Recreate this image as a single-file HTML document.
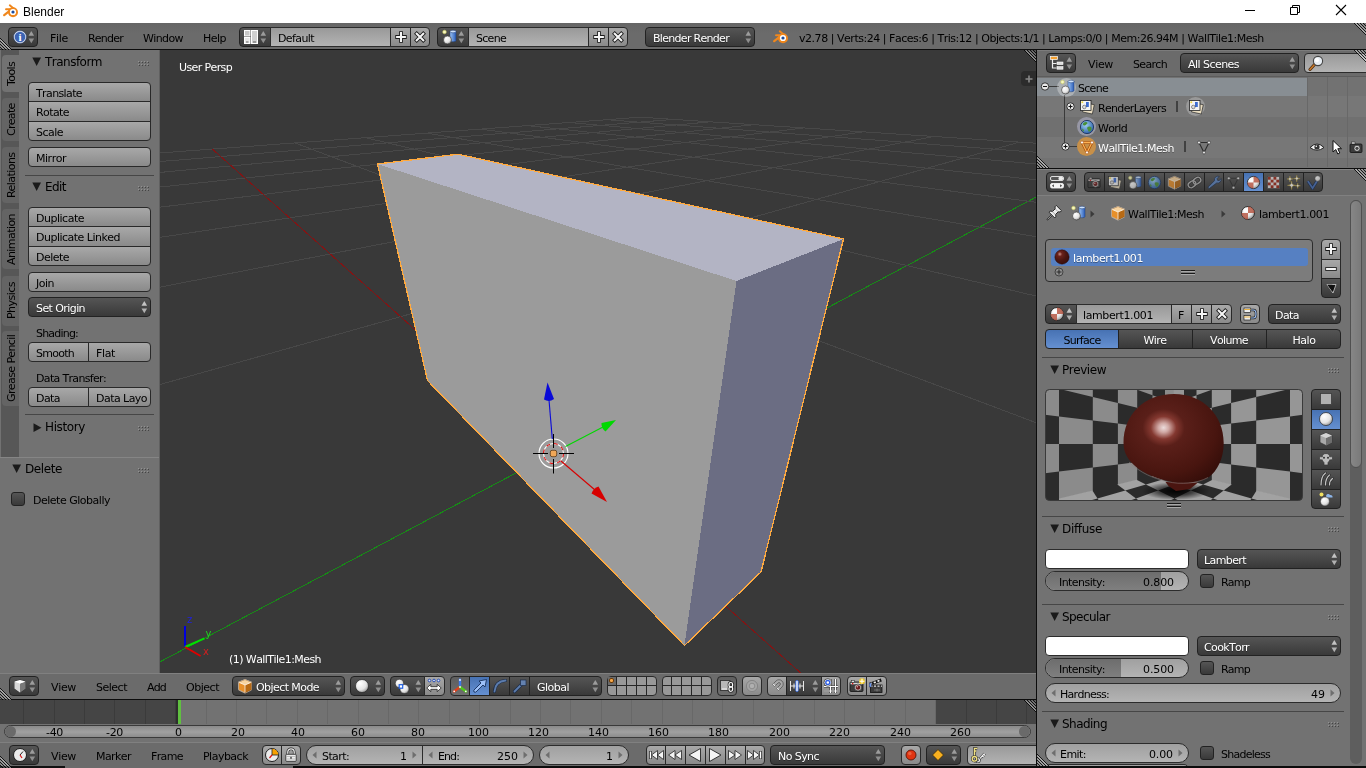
<!DOCTYPE html>
<html><head><meta charset="utf-8"><title>Blender</title>
<style>
html,body{margin:0;padding:0;background:#727272;overflow:hidden}
body{width:1366px;height:768px;position:relative;font-family:"DejaVu Sans","Liberation Sans",sans-serif;font-size:11px;color:#000}
div,span,svg{position:absolute;box-sizing:border-box}
.t{will-change:transform;white-space:nowrap;line-height:13px;font-size:11px;letter-spacing:-0.43px;font-kerning:none}
.w{color:#fff;text-shadow:0 1px 0 rgba(0,0,0,.35)}
.pt{font-size:12px;line-height:14px;letter-spacing:-0.38px}
.tool{border:1px solid #292929;background:linear-gradient(#a8a8a8,#8a8a8a);}
.ton{border:1px solid #292929;background:linear-gradient(#5e5e5e,#6e6e6e);}
.menu{border:1px solid #222;background:linear-gradient(#555,#393939);border-radius:4px}
.num{border:1px solid #2c2c2c;background:linear-gradient(#a0a0a0,#b4b4b4);border-radius:10px}
.txf{border:1px solid #2c2c2c;background:linear-gradient(#999,#b3b3b3)}
.rad{border:1px solid #222;background:linear-gradient(#555,#393939)}
.sel{background:linear-gradient(#4772b3,#6590d1)}
.chk{border:1px solid #222;background:linear-gradient(#555,#393939);border-radius:3px}
.r4{border-radius:4px}
.rl{border-radius:4px 0 0 4px}
.rr{border-radius:0 4px 4px 0}
.rt{border-radius:4px 4px 0 0}
.rb{border-radius:0 0 4px 4px}
.sep{background:#464646;height:1px}
</style></head>
<body>
<svg width="0" height="0" style="left:0;top:0"><defs><radialGradient id="gs" cx="0.35" cy="0.3" r="0.8"><stop offset="0" stop-color="#fff"/><stop offset="0.6" stop-color="#e4e4e4"/><stop offset="1" stop-color="#8a8a8a"/></radialGradient><radialGradient id="gw" cx="0.4" cy="0.35" r="0.7"><stop offset="0" stop-color="#9fd0f0"/><stop offset="1" stop-color="#2a5ea8"/></radialGradient><linearGradient id="gc" x1="0" x2="1"><stop offset="0" stop-color="#9cc4f4"/><stop offset="1" stop-color="#2a5cb8"/></linearGradient><radialGradient id="gm" cx="0.35" cy="0.3" r="0.9"><stop offset="0" stop-color="#c89088"/><stop offset="0.18" stop-color="#6a221c"/><stop offset="0.5" stop-color="#4a1611"/><stop offset="1" stop-color="#300a07"/></radialGradient></defs></svg>
<div style="left:0px;top:0px;width:1366px;height:23px;background:#fff"></div>
<span class="t " style="left:23px;top:4px;font-family:'Liberation Sans',sans-serif;font-size:12px;line-height:16px;color:#000;letter-spacing:0">Blender</span>
<svg style="left:3px;top:3px" width="16" height="16" viewBox="0 0 16 16"><g stroke="#f0871c" stroke-linecap="round" fill="none"><path d="M1.200 12.200L7.500 7.200" stroke-width="2.200"/><path d="M3 6.300h6" stroke-width="1.900"/><path d="M6.800 2.300L10.500 5.500" stroke-width="1.900"/></g><circle cx="10" cy="9.300" r="5" fill="#f0871c"/><circle cx="10" cy="9" r="3.100" fill="#fff"/><circle cx="10" cy="9" r="1.600" fill="#1c4c9c"/></svg>
<svg style="left:1230px;top:0px" width="136" height="23" viewBox="0 0 136 23"><path d="M15 10.500h10" stroke="#000" fill="none"/><path d="M60.500 7.500h7v7h-7z M62.500 7.500v-2h7v7h-2" stroke="#000" fill="none"/><path d="M106 5l10 10M116 5l-10 10" stroke="#000" fill="none" stroke-width="1.100"/></svg>
<div style="left:0px;top:23px;width:1366px;height:26px;background:linear-gradient(#666,#6b6b6b 40%)"></div>
<div style="left:0px;top:49px;width:1366px;height:1px;background:#0c0c0c"></div>
<div class="menu" style="left:8px;top:27px;width:30px;height:20px;"></div>
<svg style="left:27.8px;top:30.5px" width="7" height="13" viewBox="0 0 7 13"><path d="M0.500 4.800L3.300 0L6.100 4.800z" fill="#9c9c9c"/><path d="M0.500 7.400L3.300 12.300L6.100 7.400z" fill="#9c9c9c" opacity="0.85"/></svg>
<svg style="left:13px;top:30px" width="14" height="14" viewBox="0 0 16 16"><circle cx="8" cy="8" r="6.700" fill="#3c64b4" stroke="#dfe6f4" stroke-width="1.300"/><circle cx="8" cy="8" r="7.400" fill="none" stroke="#223a6a" stroke-width="0.600"/><text x="8" y="12.300" font-family="Liberation Serif,DejaVu Serif,serif" font-weight="bold" font-size="12.500" fill="#fff" text-anchor="middle">i</text></svg>
<span class="t " style="left:50px;top:32px;letter-spacing:-0.305px;">File</span>
<span class="t " style="left:88px;top:32px;letter-spacing:-0.775px;">Render</span>
<span class="t " style="left:143px;top:32px;letter-spacing:-0.603px;">Window</span>
<span class="t " style="left:203px;top:32px;letter-spacing:-0.52px;">Help</span>
<div class="menu" style="left:239px;top:27px;width:32px;height:20px;border-radius:4px 0 0 4px"></div>
<svg style="left:260.3px;top:30.5px" width="7" height="13" viewBox="0 0 7 13"><path d="M0.500 4.800L3.300 0L6.100 4.800z" fill="#9c9c9c"/><path d="M0.500 7.400L3.300 12.300L6.100 7.400z" fill="#9c9c9c" opacity="0.85"/></svg>
<svg style="left:243px;top:29px" width="16" height="16" viewBox="0 0 16 16"><rect x="1.500" y="1.500" width="5.500" height="5.500" fill="#c8c8c8" stroke="#fff" stroke-width="1"/><rect x="1.500" y="8.500" width="5.500" height="6" fill="#e8e8e8" stroke="#fff" stroke-width="1"/><rect x="8.500" y="1.500" width="6" height="13" fill="#d0d0d0" stroke="#fff" stroke-width="1"/><path d="M3 13h2.500M10 13h3" stroke="#444" stroke-width="0.800"/></svg>
<div class="txf" style="left:270px;top:27px;width:121px;height:20px;"></div>
<span class="t " style="left:278px;top:32px;letter-spacing:-0.599px;">Default</span>
<div class="tool" style="left:390px;top:27px;width:21px;height:20px;"></div>
<svg style="left:393px;top:29px" width="16" height="16" viewBox="0 0 16 16"><path d="M8 2.300v11.400M2.300 8h11.400" stroke="#1a1a1a" stroke-width="3.800" fill="none"/><path d="M8 3.100v9.800M3.100 8h9.800" stroke="#f6f6f6" stroke-width="2.100" fill="none"/></svg>
<div class="tool rr" style="left:410px;top:27px;width:20px;height:20px;"></div>
<svg style="left:412px;top:29px" width="16" height="16" viewBox="0 0 16 16"><path d="M3.400 3.400l9.200 9.200M12.600 3.400l-9.200 9.200" stroke="#1a1a1a" stroke-width="3.800" fill="none"/><path d="M4 4l8 8M12 4l-8 8" stroke="#f6f6f6" stroke-width="2.100" fill="none"/></svg>
<div class="menu" style="left:437px;top:27px;width:32px;height:20px;border-radius:4px 0 0 4px"></div>
<svg style="left:458.3px;top:30.5px" width="7" height="13" viewBox="0 0 7 13"><path d="M0.500 4.800L3.300 0L6.100 4.800z" fill="#9c9c9c"/><path d="M0.500 7.400L3.300 12.300L6.100 7.400z" fill="#9c9c9c" opacity="0.85"/></svg>
<svg style="left:441px;top:29px" width="16" height="16" viewBox="0 0 16 16"><circle cx="3.500" cy="3" r="1.800" fill="#f8f8c0" stroke="#c8c860" stroke-width="0.600"/><path d="M9 2.500v9a3 1.300 0 0 0 6 0v-9z" fill="url(#gc)" stroke="#1c3c78" stroke-width="0.500"/><ellipse cx="12" cy="2.500" rx="3" ry="1.300" fill="#cfe2fa" stroke="#1c3c78" stroke-width="0.500"/><circle cx="6.500" cy="11" r="4" fill="url(#gs)" stroke="#333" stroke-width="0.600"/></svg>
<div class="txf" style="left:468px;top:27px;width:121px;height:20px;"></div>
<span class="t " style="left:476px;top:32px;letter-spacing:-0.708px;">Scene</span>
<div class="tool" style="left:588px;top:27px;width:21px;height:20px;"></div>
<svg style="left:591px;top:29px" width="16" height="16" viewBox="0 0 16 16"><path d="M8 2.300v11.400M2.300 8h11.400" stroke="#1a1a1a" stroke-width="3.800" fill="none"/><path d="M8 3.100v9.800M3.100 8h9.800" stroke="#f6f6f6" stroke-width="2.100" fill="none"/></svg>
<div class="tool rr" style="left:608px;top:27px;width:20px;height:20px;"></div>
<svg style="left:610px;top:29px" width="16" height="16" viewBox="0 0 16 16"><path d="M3.400 3.400l9.200 9.200M12.600 3.400l-9.200 9.200" stroke="#1a1a1a" stroke-width="3.800" fill="none"/><path d="M4 4l8 8M12 4l-8 8" stroke="#f6f6f6" stroke-width="2.100" fill="none"/></svg>
<div class="menu" style="left:645px;top:27px;width:110px;height:20px;"></div>
<svg style="left:744.8px;top:30.5px" width="7" height="13" viewBox="0 0 7 13"><path d="M0.500 4.800L3.300 0L6.100 4.800z" fill="#9c9c9c"/><path d="M0.500 7.400L3.300 12.300L6.100 7.400z" fill="#9c9c9c" opacity="0.85"/></svg>
<span class="t w" style="left:653px;top:32px;letter-spacing:-0.698px;">Blender Render</span>
<svg style="left:773px;top:29px" width="16" height="16" viewBox="0 0 16 16"><g stroke="#f0871c" stroke-linecap="round" fill="none"><path d="M1.200 12.200L7.500 7.200" stroke-width="2.200"/><path d="M3 6.300h6" stroke-width="1.900"/><path d="M6.800 2.300L10.500 5.500" stroke-width="1.900"/></g><circle cx="10" cy="9.300" r="5" fill="#f0871c"/><circle cx="10" cy="9" r="3.100" fill="#fff"/><circle cx="10" cy="9" r="1.600" fill="#1c4c9c"/></svg>
<span class="t " style="left:799px;top:32px;letter-spacing:-0.467px;">v2.78 | Verts:24 | Faces:6 | Tris:12 | Objects:1/1 | Lamps:0/0 | Mem:26.94M | WallTile1:Mesh</span>
<svg style="left:0px;top:38px" width="12" height="12" viewBox="0 0 12 12"><path d="M0 0L12 12" stroke="#000" stroke-opacity="0.8" stroke-width="1"/><path d="M0 1.4L10.6 12" stroke="#fff" stroke-opacity="0.75" stroke-width="1"/><path d="M0 3L9 12" stroke="#000" stroke-opacity="0.8" stroke-width="1"/><path d="M0 4.4L7.6 12" stroke="#fff" stroke-opacity="0.6" stroke-width="1"/><path d="M0 6L6 12" stroke="#000" stroke-opacity="0.8" stroke-width="1"/><path d="M0 7.4L4.6 12" stroke="#fff" stroke-opacity="0.45" stroke-width="1"/><path d="M0 9L3 12" stroke="#000" stroke-opacity="0.8" stroke-width="1"/><path d="M0 10.4L1.6 12" stroke="#fff" stroke-opacity="0.3" stroke-width="1"/></svg>
<svg style="left:1354px;top:23px" width="12" height="12" viewBox="0 0 12 12"><path d="M0 0L12 12" stroke="#000" stroke-opacity="0.8" stroke-width="1"/><path d="M1.4 0L12 10.6" stroke="#fff" stroke-opacity="0.75" stroke-width="1"/><path d="M3 0L12 9" stroke="#000" stroke-opacity="0.8" stroke-width="1"/><path d="M4.4 0L12 7.6" stroke="#fff" stroke-opacity="0.6" stroke-width="1"/><path d="M6 0L12 6" stroke="#000" stroke-opacity="0.8" stroke-width="1"/><path d="M7.4 0L12 4.6" stroke="#fff" stroke-opacity="0.45" stroke-width="1"/><path d="M9 0L12 3" stroke="#000" stroke-opacity="0.8" stroke-width="1"/><path d="M10.4 0L12 1.6" stroke="#fff" stroke-opacity="0.3" stroke-width="1"/></svg>
<div style="left:0px;top:50px;width:159px;height:623px;background:#727272"></div>
<div style="left:1px;top:50px;width:18px;height:407px;background:#575757"></div>
<svg style="left:32px;top:57px" width="10" height="10" viewBox="0 0 10 10"><path d="M0.300 0.500h8.700L4.650 9z" fill="#1a1a1a"/></svg>
<span class="t pt" style="left:45px;top:55px;letter-spacing:-0.518px;">Transform</span>
<svg style="left:138px;top:61px" width="12" height="6" viewBox="0 0 12 6"><rect x="0" y="0" width="1" height="1" fill="#929292"/><rect x="1" y="1" width="1" height="1" fill="#444"/><rect x="0" y="3" width="1" height="1" fill="#929292"/><rect x="1" y="4" width="1" height="1" fill="#444"/><rect x="3" y="0" width="1" height="1" fill="#929292"/><rect x="4" y="1" width="1" height="1" fill="#444"/><rect x="3" y="3" width="1" height="1" fill="#929292"/><rect x="4" y="4" width="1" height="1" fill="#444"/><rect x="6" y="0" width="1" height="1" fill="#929292"/><rect x="7" y="1" width="1" height="1" fill="#444"/><rect x="6" y="3" width="1" height="1" fill="#929292"/><rect x="7" y="4" width="1" height="1" fill="#444"/><rect x="9" y="0" width="1" height="1" fill="#929292"/><rect x="10" y="1" width="1" height="1" fill="#444"/><rect x="9" y="3" width="1" height="1" fill="#929292"/><rect x="10" y="4" width="1" height="1" fill="#444"/></svg>
<div class="tool rt" style="left:28px;top:82px;width:123px;height:20px;"></div>
<span class="t " style="left:36px;top:87px;letter-spacing:-0.618px;">Translate</span>
<div class="tool " style="left:28px;top:101px;width:123px;height:21px;"></div>
<span class="t " style="left:36px;top:106px;letter-spacing:-0.583px;">Rotate</span>
<div class="tool rb" style="left:28px;top:121px;width:123px;height:20px;"></div>
<span class="t " style="left:36px;top:126px;letter-spacing:-0.52px;">Scale</span>
<div class="tool r4" style="left:28px;top:147px;width:123px;height:20px;"></div>
<span class="t " style="left:36px;top:152px;letter-spacing:-0.473px;">Mirror</span>
<div class="sep" style="left:25px;top:175px;width:129px;height:1px;"></div>
<svg style="left:32px;top:182px" width="10" height="10" viewBox="0 0 10 10"><path d="M0.300 0.500h8.700L4.650 9z" fill="#1a1a1a"/></svg>
<span class="t pt" style="left:45px;top:180px;letter-spacing:-0.559px;">Edit</span>
<svg style="left:138px;top:186px" width="12" height="6" viewBox="0 0 12 6"><rect x="0" y="0" width="1" height="1" fill="#929292"/><rect x="1" y="1" width="1" height="1" fill="#444"/><rect x="0" y="3" width="1" height="1" fill="#929292"/><rect x="1" y="4" width="1" height="1" fill="#444"/><rect x="3" y="0" width="1" height="1" fill="#929292"/><rect x="4" y="1" width="1" height="1" fill="#444"/><rect x="3" y="3" width="1" height="1" fill="#929292"/><rect x="4" y="4" width="1" height="1" fill="#444"/><rect x="6" y="0" width="1" height="1" fill="#929292"/><rect x="7" y="1" width="1" height="1" fill="#444"/><rect x="6" y="3" width="1" height="1" fill="#929292"/><rect x="7" y="4" width="1" height="1" fill="#444"/><rect x="9" y="0" width="1" height="1" fill="#929292"/><rect x="10" y="1" width="1" height="1" fill="#444"/><rect x="9" y="3" width="1" height="1" fill="#929292"/><rect x="10" y="4" width="1" height="1" fill="#444"/></svg>
<div class="tool rt" style="left:28px;top:207px;width:123px;height:20px;"></div>
<span class="t " style="left:36px;top:212px;letter-spacing:-0.49px;">Duplicate</span>
<div class="tool " style="left:28px;top:226px;width:123px;height:21px;"></div>
<span class="t " style="left:36px;top:231px;letter-spacing:-0.512px;">Duplicate Linked</span>
<div class="tool rb" style="left:28px;top:246px;width:123px;height:20px;"></div>
<span class="t " style="left:36px;top:251px;letter-spacing:-0.525px;">Delete</span>
<div class="tool r4" style="left:28px;top:272px;width:123px;height:20px;"></div>
<span class="t " style="left:36px;top:277px;letter-spacing:-0.5px;">Join</span>
<div class="menu" style="left:28px;top:297px;width:123px;height:20px;"></div>
<span class="t w" style="left:36px;top:302px;letter-spacing:-0.581px;">Set Origin</span>
<svg style="left:140.8px;top:300.5px" width="7" height="13" viewBox="0 0 7 13"><path d="M0.500 4.800L3.300 0L6.100 4.800z" fill="#c4c4c4"/><path d="M0.500 7.400L3.300 12.300L6.100 7.400z" fill="#c4c4c4" opacity="0.85"/></svg>
<span class="t " style="left:36px;top:327px;letter-spacing:-0.799px;">Shading:</span>
<div class="tool rl" style="left:28px;top:342px;width:61px;height:20px;"></div>
<span class="t " style="left:36px;top:347px;letter-spacing:-0.74px;">Smooth</span>
<div class="tool rr" style="left:88px;top:342px;width:63px;height:20px;"></div>
<span class="t " style="left:96px;top:347px;letter-spacing:-0.36px;">Flat</span>
<span class="t " style="left:36px;top:372px;letter-spacing:-0.665px;">Data Transfer:</span>
<div class="tool rl" style="left:28px;top:387px;width:61px;height:20px;"></div>
<span class="t " style="left:36px;top:392px;letter-spacing:-0.565px;">Data</span>
<div class="tool rr" style="left:88px;top:387px;width:63px;height:20px;"></div>
<span class="t " style="left:96px;top:392px;letter-spacing:-0.541px;">Data Layo</span>
<div class="sep" style="left:25px;top:414px;width:129px;height:1px;"></div>
<svg style="left:32.5px;top:422.5px" width="10" height="10" viewBox="0 0 10 10"><path d="M0.500 0.300v8.700L8.500 4.650z" fill="#1a1a1a"/></svg>
<span class="t pt" style="left:45px;top:420px;letter-spacing:-0.384px;">History</span>
<svg style="left:138px;top:426px" width="12" height="6" viewBox="0 0 12 6"><rect x="0" y="0" width="1" height="1" fill="#929292"/><rect x="1" y="1" width="1" height="1" fill="#444"/><rect x="0" y="3" width="1" height="1" fill="#929292"/><rect x="1" y="4" width="1" height="1" fill="#444"/><rect x="3" y="0" width="1" height="1" fill="#929292"/><rect x="4" y="1" width="1" height="1" fill="#444"/><rect x="3" y="3" width="1" height="1" fill="#929292"/><rect x="4" y="4" width="1" height="1" fill="#444"/><rect x="6" y="0" width="1" height="1" fill="#929292"/><rect x="7" y="1" width="1" height="1" fill="#444"/><rect x="6" y="3" width="1" height="1" fill="#929292"/><rect x="7" y="4" width="1" height="1" fill="#444"/><rect x="9" y="0" width="1" height="1" fill="#929292"/><rect x="10" y="1" width="1" height="1" fill="#444"/><rect x="9" y="3" width="1" height="1" fill="#929292"/><rect x="10" y="4" width="1" height="1" fill="#444"/></svg>
<div style="left:0px;top:457px;width:159px;height:1px;background:#858585"></div>
<svg style="left:12px;top:464px" width="10" height="10" viewBox="0 0 10 10"><path d="M0.300 0.500h8.700L4.650 9z" fill="#1a1a1a"/></svg>
<span class="t pt" style="left:25px;top:462px;letter-spacing:-0.406px;">Delete</span>
<svg style="left:138px;top:468px" width="12" height="6" viewBox="0 0 12 6"><rect x="0" y="0" width="1" height="1" fill="#929292"/><rect x="1" y="1" width="1" height="1" fill="#444"/><rect x="0" y="3" width="1" height="1" fill="#929292"/><rect x="1" y="4" width="1" height="1" fill="#444"/><rect x="3" y="0" width="1" height="1" fill="#929292"/><rect x="4" y="1" width="1" height="1" fill="#444"/><rect x="3" y="3" width="1" height="1" fill="#929292"/><rect x="4" y="4" width="1" height="1" fill="#444"/><rect x="6" y="0" width="1" height="1" fill="#929292"/><rect x="7" y="1" width="1" height="1" fill="#444"/><rect x="6" y="3" width="1" height="1" fill="#929292"/><rect x="7" y="4" width="1" height="1" fill="#444"/><rect x="9" y="0" width="1" height="1" fill="#929292"/><rect x="10" y="1" width="1" height="1" fill="#444"/><rect x="9" y="3" width="1" height="1" fill="#929292"/><rect x="10" y="4" width="1" height="1" fill="#444"/></svg>
<div class="chk" style="left:11px;top:492px;width:14px;height:14px;"></div>
<span class="t " style="left:33px;top:494px;letter-spacing:-0.487px;">Delete Globally</span>
<div style="left:2px;top:55px;width:18px;height:37px;background:#727272;border-radius:4px 0 0 4px"></div>
<span style="left:4.500px;top:55px;height:37px;width:14px;line-height:14px;text-align:center;writing-mode:vertical-rl;transform:rotate(180deg);font-size:11px;letter-spacing:-0.594px;font-kerning:none;white-space:nowrap;will-change:transform">Tools</span>
<div style="left:2px;top:98px;width:17px;height:43px;background:#646464;border-radius:4px 0 0 4px"></div>
<span style="left:4.500px;top:98px;height:43px;width:14px;line-height:14px;text-align:center;writing-mode:vertical-rl;transform:rotate(180deg);font-size:11px;letter-spacing:-0.632px;font-kerning:none;white-space:nowrap;will-change:transform">Create</span>
<div style="left:2px;top:147px;width:17px;height:56px;background:#646464;border-radius:4px 0 0 4px"></div>
<span style="left:4.500px;top:147px;height:56px;width:14px;line-height:14px;text-align:center;writing-mode:vertical-rl;transform:rotate(180deg);font-size:11px;letter-spacing:-0.557px;font-kerning:none;white-space:nowrap;will-change:transform">Relations</span>
<div style="left:2px;top:209px;width:17px;height:60px;background:#646464;border-radius:4px 0 0 4px"></div>
<span style="left:4.500px;top:209px;height:60px;width:14px;line-height:14px;text-align:center;writing-mode:vertical-rl;transform:rotate(180deg);font-size:11px;letter-spacing:-0.564px;font-kerning:none;white-space:nowrap;will-change:transform">Animation</span>
<div style="left:2px;top:276px;width:17px;height:50px;background:#646464;border-radius:4px 0 0 4px"></div>
<span style="left:4.500px;top:276px;height:50px;width:14px;line-height:14px;text-align:center;writing-mode:vertical-rl;transform:rotate(180deg);font-size:11px;letter-spacing:-0.526px;font-kerning:none;white-space:nowrap;will-change:transform">Physics</span>
<div style="left:2px;top:331px;width:17px;height:75px;background:#646464;border-radius:4px 0 0 4px"></div>
<span style="left:4.500px;top:331px;height:75px;width:14px;line-height:14px;text-align:center;writing-mode:vertical-rl;transform:rotate(180deg);font-size:11px;letter-spacing:-0.545px;font-kerning:none;white-space:nowrap;will-change:transform">Grease Pencil</span>
<div style="left:159px;top:50px;width:1px;height:623px;background:#606060"></div>
<div style="left:160px;top:50px;width:876px;height:623px;background:#393939"></div>
<span class="t w" style="left:179px;top:61px;letter-spacing:-0.62px;text-shadow:none">User Persp</span>
<span class="t w" style="left:229px;top:653px;text-shadow:none;letter-spacing:-0.560px">(1) WallTile1:Mesh</span>
<svg style="left:160px;top:50px" width="876" height="623" viewBox="160 50 876 623"><g shape-rendering="crispEdges" stroke-width="1"><line x1="-1977.2" y1="312.2" x2="640.3" y2="117.2" stroke="#484848"/><line x1="-1977.2" y1="312.2" x2="-15618.5" y2="1780.8" stroke="#484848"/><line x1="-2951.4" y1="417.1" x2="673.1" y2="119.4" stroke="#484848"/><line x1="-1311.4" y1="262.6" x2="-13441.7" y2="1753.1" stroke="#484848"/><line x1="-5586.9" y1="700.8" x2="710.6" y2="121.8" stroke="#484848"/><line x1="-871.8" y1="229.8" x2="-11264.9" y2="1725.4" stroke="#484848"/><line x1="-14943.0" y1="1772.2" x2="753.7" y2="124.7" stroke="#484848"/><line x1="-559.9" y1="206.6" x2="-9088.1" y2="1697.7" stroke="#484848"/><line x1="-12277.0" y1="1738.3" x2="803.9" y2="127.9" stroke="#484848"/><line x1="-327.1" y1="189.3" x2="-6911.3" y2="1670.0" stroke="#484848"/><line x1="-9611.0" y1="1704.3" x2="863.0" y2="131.8" stroke="#484848"/><line x1="-146.7" y1="175.8" x2="-4734.5" y2="1642.2" stroke="#484848"/><line x1="-6945.1" y1="1670.4" x2="933.7" y2="136.5" stroke="#484848"/><line x1="-2.8" y1="165.1" x2="-2557.8" y2="1614.5" stroke="#484848"/><line x1="-4279.1" y1="1636.4" x2="1019.6" y2="142.1" stroke="#484848"/><line x1="114.7" y1="156.4" x2="-381.0" y2="1586.8" stroke="#484848"/><line x1="-1613.1" y1="1602.5" x2="1126.5" y2="149.1" stroke="#178a17"/><line x1="212.4" y1="149.1" x2="1795.8" y2="1559.1" stroke="#821414"/><line x1="1052.9" y1="1568.6" x2="1262.8" y2="158.1" stroke="#484848"/><line x1="294.9" y1="142.9" x2="3972.6" y2="1531.4" stroke="#484848"/><line x1="3718.8" y1="1534.6" x2="1442.9" y2="169.9" stroke="#484848"/><line x1="365.6" y1="137.7" x2="6149.4" y2="1503.7" stroke="#484848"/><line x1="6384.8" y1="1500.7" x2="1691.8" y2="186.3" stroke="#484848"/><line x1="426.7" y1="133.1" x2="8326.2" y2="1475.9" stroke="#484848"/><line x1="9050.8" y1="1466.7" x2="2058.1" y2="210.4" stroke="#484848"/><line x1="480.2" y1="129.1" x2="10502.9" y2="1448.2" stroke="#484848"/><line x1="11716.8" y1="1432.8" x2="2650.8" y2="249.3" stroke="#484848"/><line x1="527.3" y1="125.6" x2="12679.7" y2="1420.5" stroke="#484848"/><line x1="14382.7" y1="1398.8" x2="3773.3" y2="323.1" stroke="#484848"/><line x1="569.2" y1="122.5" x2="14856.5" y2="1392.8" stroke="#484848"/><line x1="17048.7" y1="1364.9" x2="6710.9" y2="516.1" stroke="#484848"/><line x1="606.6" y1="119.7" x2="17033.3" y2="1365.1" stroke="#484848"/><line x1="640.3" y1="117.2" x2="19210.1" y2="1337.4" stroke="#484848"/></g><g shape-rendering="crispEdges"><polygon points="377.5,164 458,154 843.5,239 761,572 684.5,645.5 427.5,380.5" fill="#9b9b9b"/><polygon points="377.5,164 458,154 843.5,239 736.5,281" fill="#b3b4c4"/><polygon points="736.5,281 843.5,239 761,572 684.5,645.5" fill="#6b6d83"/><polygon points="377.5,164 458,154.2 843.5,239 761,572 684.500,645.500 427.5,380.5" fill="none" stroke="#ffaa40" stroke-width="1.3"/></g><g fill="none"><circle cx="553.5" cy="453.5" r="14.500" stroke="#fff" stroke-width="1.1"/><circle cx="553.500" cy="453.500" r="10" stroke="#fff" stroke-width="1.1"/><circle cx="553.500" cy="453.500" r="10" stroke="#e01010" stroke-width="1.1" stroke-dasharray="3.93 3.93"/><path d="M533 453.500h15M559 453.500h15M553.500 434v14M553.500 459v14.500" stroke="#000" stroke-width="1"/><path d="M552.300 439L549 400" stroke="#0a0ad8" stroke-width="1.1"/><path d="M565.500 446.500L603 427" stroke="#00d800" stroke-width="1.1"/><path d="M561 461L595 490" stroke="#d80000" stroke-width="1.1"/></g><path d="M547.500 382.500L544 399.500q5 3 10 -0.500z" fill="#0a0ad8"/><path d="M616 420L601.500 423q-0.500 5 4 8.500z" fill="#00d800"/><path d="M607 502L598.500 486.500q-5 1.500 -7 7z" fill="#d80000"/><rect x="550.300" y="450.300" width="6.400" height="6.400" rx="1.800" fill="#f0a858" stroke="#5a3a18" stroke-width="0.8"/><path d="M185 647V626" stroke="#0000e0" stroke-width="2"/><path d="M185 647L204.500 638.300" stroke="#00e000" stroke-width="2"/><path d="M185 647L200.600 656" stroke="#e00000" stroke-width="2"/><text x="187" y="623" font-size="10" fill="#2020e0" font-family="DejaVu Sans">z</text><text x="205.500" y="636.500" font-size="10" fill="#20d020" font-family="DejaVu Sans">y</text><text x="203" y="655" font-size="10" fill="#d02020" font-family="DejaVu Sans">x</text></svg>
<div style="left:1021px;top:71px;width:15px;height:15px;background:#2c2c2c;border-radius:4px 0 0 4px"></div>
<svg style="left:1024.5px;top:74.5px" width="8" height="8" viewBox="0 0 8 8"><path d="M4 0.500v7M0.500 4h7" stroke="#8a8a8a" stroke-width="1.600"/></svg>
<svg style="left:1024px;top:50px" width="12" height="12" viewBox="0 0 12 12"><path d="M0 0L12 12" stroke="#000" stroke-opacity="0.8" stroke-width="1"/><path d="M1.4 0L12 10.6" stroke="#fff" stroke-opacity="0.75" stroke-width="1"/><path d="M3 0L12 9" stroke="#000" stroke-opacity="0.8" stroke-width="1"/><path d="M4.4 0L12 7.6" stroke="#fff" stroke-opacity="0.6" stroke-width="1"/><path d="M6 0L12 6" stroke="#000" stroke-opacity="0.8" stroke-width="1"/><path d="M7.4 0L12 4.6" stroke="#fff" stroke-opacity="0.45" stroke-width="1"/><path d="M9 0L12 3" stroke="#000" stroke-opacity="0.8" stroke-width="1"/><path d="M10.4 0L12 1.6" stroke="#fff" stroke-opacity="0.3" stroke-width="1"/></svg>
<div style="left:0px;top:673px;width:1036px;height:1px;background:#808080"></div>
<div style="left:0px;top:674px;width:1036px;height:25px;background:#6b6b6b"></div>
<div style="left:0px;top:699px;width:1036px;height:1px;background:#0c0c0c"></div>
<div class="menu" style="left:9px;top:676px;width:30px;height:20px;"></div>
<svg style="left:28.8px;top:679.5px" width="7" height="13" viewBox="0 0 7 13"><path d="M0.500 4.800L3.300 0L6.100 4.800z" fill="#9c9c9c"/><path d="M0.500 7.400L3.300 12.300L6.100 7.400z" fill="#9c9c9c" opacity="0.85"/></svg>
<svg style="left:12px;top:678px" width="16" height="16" viewBox="0 0 16 16"><path d="M2.500 3.500L8 2l5.500 1.500v7L8 14.500L2.500 10.500z" fill="#f4f4f4" stroke="#2a2a2a" stroke-width="0.800"/><path d="M8 5.500l5.500-2v7L8 14.500z" fill="#7a7a7a"/><path d="M2.500 3.500L8 5.500v9L2.500 10.500z" fill="#d8d8d8"/><path d="M2.500 3.500L8 2l5.500 1.500L8 5.500z" fill="#fff"/></svg>
<span class="t " style="left:51px;top:681px;letter-spacing:-0.338px;">View</span>
<span class="t " style="left:96px;top:681px;letter-spacing:-0.49px;">Select</span>
<span class="t " style="left:147px;top:681px;letter-spacing:-0.827px;">Add</span>
<span class="t " style="left:186px;top:681px;letter-spacing:-0.472px;">Object</span>
<div class="menu" style="left:232px;top:676px;width:113px;height:20px;"></div>
<svg style="left:237px;top:678px" width="16" height="16" viewBox="0 0 16 16"><path d="M1.500 4.200L8 1.500l6.500 2.700v7.600L8 15l-6.500-3.200z" fill="#e8902a" stroke="#fff" stroke-width="0.900" stroke-linejoin="round"/><path d="M8 7l6.500-2.800v7.600L8 15z" fill="#b86a14"/><path d="M1.500 4.200L8 1.500l6.500 2.700L8 7z" fill="#f8d4a0"/><path d="M1.500 4.200L8 7l6.500-2.800M8 7v8" stroke="#fff" stroke-width="0.700" fill="none"/><path d="M1.500 4.200L8 1.500l6.500 2.700v7.600L8 15l-6.500-3.200z" fill="none" stroke="#5a3208" stroke-width="0.400"/></svg>
<span class="t w" style="left:256px;top:681px;letter-spacing:-0.573px;">Object Mode</span>
<svg style="left:334.8px;top:679.5px" width="7" height="13" viewBox="0 0 7 13"><path d="M0.500 4.800L3.300 0L6.100 4.800z" fill="#9c9c9c"/><path d="M0.500 7.400L3.300 12.300L6.100 7.400z" fill="#9c9c9c" opacity="0.85"/></svg>
<div class="menu" style="left:350px;top:676px;width:35px;height:20px;"></div>
<svg style="left:354px;top:678px" width="16" height="16" viewBox="0 0 16 16"><circle cx="8" cy="8" r="6.500" fill="url(#gs)" stroke="#222" stroke-width="0.700"/></svg>
<svg style="left:374.8px;top:679.5px" width="7" height="13" viewBox="0 0 7 13"><path d="M0.500 4.800L3.300 0L6.100 4.800z" fill="#9c9c9c"/><path d="M0.500 7.400L3.300 12.300L6.100 7.400z" fill="#9c9c9c" opacity="0.85"/></svg>
<div class="menu" style="left:390px;top:676px;width:35px;height:20px;border-radius:4px 0 0 4px"></div>
<svg style="left:394px;top:678px" width="16" height="16" viewBox="0 0 16 16"><circle cx="5.500" cy="5.500" r="4.200" fill="url(#gs)" stroke="#222" stroke-width="0.500"/><circle cx="10.500" cy="11" r="4.500" fill="url(#gs)" stroke="#222" stroke-width="0.500"/><rect x="5.200" y="6.700" width="3.500" height="3.500" fill="#fff" stroke="#1c5ce0" stroke-width="1.200"/></svg>
<svg style="left:414.8px;top:679.5px" width="7" height="13" viewBox="0 0 7 13"><path d="M0.500 4.800L3.300 0L6.100 4.800z" fill="#9c9c9c"/><path d="M0.500 7.400L3.300 12.300L6.100 7.400z" fill="#9c9c9c" opacity="0.85"/></svg>
<div class="tool rr" style="left:424px;top:676px;width:21px;height:20px;"></div>
<svg style="left:426px;top:678px" width="16" height="16" viewBox="0 0 16 16"><g fill="#dfe8ff" stroke="#1c44b0" stroke-width="0.900"><circle cx="3.500" cy="2.500" r="1.300"/><circle cx="8" cy="2.500" r="1.300"/><circle cx="12.500" cy="2.500" r="1.300"/></g><path d="M0.800 10l4-3.700v2.400h6.400V6.300l4 3.700l-4 3.700v-2.400H4.800v2.400z" fill="#fff" stroke="#222" stroke-width="0.800" stroke-linejoin="round"/></svg>
<div class="ton rl" style="left:450px;top:676px;width:20px;height:20px;"></div>
<svg style="left:452px;top:678px" width="16" height="16" viewBox="0 0 16 16"><path d="M8 9V1.500" stroke="#3c78e8" stroke-width="2.400" stroke-linecap="round"/><path d="M8 9L2 13.500" stroke="#e0401c" stroke-width="2.400" stroke-linecap="round"/><path d="M8 9l6 4.500" stroke="#50c818" stroke-width="2.400" stroke-linecap="round"/><circle cx="8" cy="2" r="0.900" fill="#fff"/><circle cx="2.200" cy="13.300" r="0.900" fill="#fff"/><circle cx="13.800" cy="13.300" r="0.900" fill="#fff"/><circle cx="8" cy="9" r="1" fill="#eee"/></svg>
<div class="rad sel" style="left:469px;top:676px;width:21px;height:20px;"></div>
<svg style="left:472px;top:678px" width="16" height="16" viewBox="0 0 16 16"><path d="M2 14l1.800.200L11 7l2 2l1.500-7.500L7 3l2 2L1.800 12.200z" fill="#9cc0f8" stroke="#15305c" stroke-width="0.900" stroke-linejoin="round"/></svg>
<div class="rad" style="left:489px;top:676px;width:21px;height:20px;"></div>
<svg style="left:492px;top:678px" width="16" height="16" viewBox="0 0 16 16"><path d="M2.500 13.500C3 7 7 3 13.500 2.500" fill="none" stroke="#1c2c48" stroke-width="3.200" stroke-linecap="round"/><path d="M2.500 13.500C3 7 7 3 13.500 2.500" fill="none" stroke="#5c7cac" stroke-width="1.800" stroke-linecap="round"/></svg>
<div class="rad" style="left:509px;top:676px;width:21px;height:20px;"></div>
<svg style="left:512px;top:678px" width="16" height="16" viewBox="0 0 16 16"><path d="M2.500 13.500L10 6" stroke="#1c2c48" stroke-width="3.200" stroke-linecap="round"/><path d="M2.500 13.500L10 6" stroke="#5c7cac" stroke-width="1.800" stroke-linecap="round"/><rect x="8.500" y="2" width="5.500" height="5.500" fill="#6482b0" stroke="#1c2c48" stroke-width="0.700"/></svg>
<div class="menu" style="left:529px;top:676px;width:73px;height:20px;border-radius:0 4px 4px 0"></div>
<span class="t w" style="left:537px;top:681px;letter-spacing:-0.515px;">Global</span>
<svg style="left:591.8px;top:679.5px" width="7" height="13" viewBox="0 0 7 13"><path d="M0.500 4.800L3.300 0L6.100 4.800z" fill="#9c9c9c"/><path d="M0.500 7.400L3.300 12.300L6.100 7.400z" fill="#9c9c9c" opacity="0.85"/></svg>
<div style="left:607px;top:676px;width:50px;height:20px;border:1px solid #292929;border-radius:4px;background:#989898;overflow:hidden"></div>
<div style="left:608px;top:677px;width:9px;height:9px;background:#6a6a6a"></div>
<div style="left:616px;top:677px;width:1px;height:18px;background:#262626"></div>
<div style="left:626px;top:677px;width:1px;height:18px;background:#262626"></div>
<div style="left:636px;top:677px;width:1px;height:18px;background:#262626"></div>
<div style="left:646px;top:677px;width:1px;height:18px;background:#262626"></div>
<div style="left:608px;top:685px;width:48px;height:1px;background:#262626"></div>
<div style="left:662px;top:676px;width:50px;height:20px;border:1px solid #292929;border-radius:4px;background:#989898;overflow:hidden"></div>
<div style="left:671px;top:677px;width:1px;height:18px;background:#262626"></div>
<div style="left:681px;top:677px;width:1px;height:18px;background:#262626"></div>
<div style="left:691px;top:677px;width:1px;height:18px;background:#262626"></div>
<div style="left:701px;top:677px;width:1px;height:18px;background:#262626"></div>
<div style="left:663px;top:685px;width:48px;height:1px;background:#262626"></div>
<div style="left:609px;top:678px;width:5px;height:5px;background:#f8a848;border:1px solid #6a3a08;border-radius:2px"></div>
<div class="ton r4" style="left:717px;top:676px;width:20px;height:20px;"></div>
<svg style="left:719px;top:678px" width="16" height="16" viewBox="0 0 16 16"><rect x="1.500" y="2.500" width="9.500" height="10" fill="#b8b8b8" stroke="#333" stroke-width="0.900"/><path d="M3 11h5" stroke="#fff" stroke-width="0.900"/><g fill="none" stroke="#222" stroke-width="2.600"><rect x="10" y="4.500" width="3.600" height="4.800" rx="1.800"/><rect x="10" y="8.500" width="3.600" height="4.800" rx="1.800"/></g><g fill="none" stroke="#fff" stroke-width="1.200"><rect x="10" y="4.500" width="3.600" height="4.800" rx="1.800"/><rect x="10" y="8.500" width="3.600" height="4.800" rx="1.800"/></g></svg>
<div class="tool r4" style="left:742px;top:676px;width:20px;height:20px;"></div>
<svg style="left:744px;top:678px" width="16" height="16" viewBox="0 0 16 16"><circle cx="8" cy="8" r="5.600" fill="#a4a4a4" stroke="#858585" stroke-width="1"/><circle cx="8" cy="8" r="2.800" fill="#b0b0b0" stroke="#888" stroke-width="0.900"/></svg>
<div class="tool rl" style="left:767px;top:676px;width:20px;height:20px;"></div>
<svg style="left:769px;top:678px" width="16" height="16" viewBox="0 0 16 16"><path d="M3.500 6.500L7 3a4.200 4.200 0 0 1 6 6L9.500 12.500L7.500 10.500L11 7a1.400 1.400 0 0 0-2-2L5.500 8.500z" fill="#a8a8a8" stroke="#5e5e5e" stroke-width="0.900" stroke-linejoin="round"/><path d="M3.500 6.500l2 2l1.200-1.200l-2-2zM7.500 10.500l2 2l1.200-1.200l-2-2z" fill="#e4e4e4" stroke="#5e5e5e" stroke-width="0.500"/></svg>
<div class="menu" style="left:786px;top:676px;width:36px;height:20px;border-radius:0"></div>
<svg style="left:789px;top:678px" width="16" height="16" viewBox="0 0 16 16"><path d="M1.500 3v10M14.500 3v10M5 5.500v5M11 5.500v5M1.500 8h13" stroke="#e8e8e8" stroke-width="1"/><rect x="6.800" y="2.500" width="2.400" height="11" rx="1" fill="#fff" stroke="#2c64e0" stroke-width="0.900"/></svg>
<svg style="left:811.8px;top:679.5px" width="7" height="13" viewBox="0 0 7 13"><path d="M0.500 4.800L3.300 0L6.100 4.800z" fill="#9c9c9c"/><path d="M0.500 7.400L3.300 12.300L6.100 7.400z" fill="#9c9c9c" opacity="0.85"/></svg>
<div class="tool rr" style="left:821px;top:676px;width:20px;height:20px;"></div>
<svg style="left:823px;top:678px" width="16" height="16" viewBox="0 0 16 16"><path d="M7.500 1v14M12.500 1v14M1 8.500h14M1 13h14" stroke="#333" stroke-width="2.200"/><path d="M7.500 1v14M12.500 1v14M1 8.500h14M1 13h14" stroke="#fff" stroke-width="1.100"/><circle cx="4.800" cy="4.500" r="3.800" fill="#fff" stroke="#222" stroke-width="0.700"/><circle cx="4.800" cy="4.500" r="2" fill="#fff" stroke="#2c5ce0" stroke-width="1.400"/></svg>
<div class="tool rl" style="left:847px;top:676px;width:20px;height:20px;"></div>
<svg style="left:849px;top:678px" width="16" height="16" viewBox="0 0 16 16"><rect x="1" y="4" width="13" height="9.500" rx="1" fill="#3c3c3c" stroke="#111" stroke-width="0.800"/><path d="M1.500 5.500h12" stroke="#d8d8d8" stroke-width="1.600"/><rect x="2.300" y="2.500" width="3" height="1.800" fill="#ddd" stroke="#222" stroke-width="0.500"/><circle cx="9" cy="9.500" r="3.500" fill="#c8c8c8" stroke="#222" stroke-width="0.600"/><circle cx="9" cy="9.500" r="2.300" fill="#6a1c1c"/><circle cx="8.300" cy="8.800" r="0.800" fill="#e0a0a0"/><rect x="3" y="5" width="1.300" height="1.300" fill="#e01010"/><circle cx="13" cy="3.200" r="2.900" fill="#f0c820"/><path d="M13 0.800v4.800M10.600 3.200h4.800" stroke="#fff" stroke-width="1.100"/></svg>
<div class="tool rr" style="left:866px;top:676px;width:21px;height:20px;"></div>
<svg style="left:868px;top:678px" width="16" height="16" viewBox="0 0 16 16"><rect x="2.500" y="7" width="11.500" height="7.500" fill="#3c3c3c" stroke="#111" stroke-width="0.800"/><path d="M2.500 8.200h11.500" stroke="#ddd" stroke-width="1.200" stroke-dasharray="2 1.500"/><path d="M2 6.200L13.500 1.800" stroke="#111" stroke-width="3"/><path d="M2 6.200L13.500 1.800" stroke="#f0f0f0" stroke-width="1.700" stroke-dasharray="2.200 1.800"/><rect x="1.200" y="5" width="2" height="4" fill="#6c9cf0" stroke="#224" stroke-width="0.400"/><path d="M6 12h6M9 10.500v3" stroke="#888" stroke-width="0.700"/></svg>
<svg style="left:0px;top:688px" width="12" height="12" viewBox="0 0 12 12"><path d="M0 0L12 12" stroke="#000" stroke-opacity="0.8" stroke-width="1"/><path d="M0 1.4L10.6 12" stroke="#fff" stroke-opacity="0.75" stroke-width="1"/><path d="M0 3L9 12" stroke="#000" stroke-opacity="0.8" stroke-width="1"/><path d="M0 4.4L7.6 12" stroke="#fff" stroke-opacity="0.6" stroke-width="1"/><path d="M0 6L6 12" stroke="#000" stroke-opacity="0.8" stroke-width="1"/><path d="M0 7.4L4.6 12" stroke="#fff" stroke-opacity="0.45" stroke-width="1"/><path d="M0 9L3 12" stroke="#000" stroke-opacity="0.8" stroke-width="1"/><path d="M0 10.4L1.6 12" stroke="#fff" stroke-opacity="0.3" stroke-width="1"/></svg>
<div style="left:0px;top:700px;width:1036px;height:24px;background:#727272"></div>
<div style="left:0px;top:700px;width:178px;height:24px;background:#454545"></div>
<div style="left:936px;top:700px;width:100px;height:24px;background:#454545"></div>
<div style="left:23px;top:700px;width:1px;height:24px;background:#3b3b3b"></div>
<div style="left:54px;top:700px;width:1px;height:24px;background:#3b3b3b"></div>
<div style="left:84px;top:700px;width:1px;height:24px;background:#3b3b3b"></div>
<div style="left:114px;top:700px;width:1px;height:24px;background:#3b3b3b"></div>
<div style="left:145px;top:700px;width:1px;height:24px;background:#3b3b3b"></div>
<div style="left:175px;top:700px;width:1px;height:24px;background:#3b3b3b"></div>
<div style="left:206px;top:700px;width:1px;height:24px;background:#686868"></div>
<div style="left:236px;top:700px;width:1px;height:24px;background:#686868"></div>
<div style="left:266px;top:700px;width:1px;height:24px;background:#686868"></div>
<div style="left:297px;top:700px;width:1px;height:24px;background:#686868"></div>
<div style="left:327px;top:700px;width:1px;height:24px;background:#686868"></div>
<div style="left:358px;top:700px;width:1px;height:24px;background:#686868"></div>
<div style="left:388px;top:700px;width:1px;height:24px;background:#686868"></div>
<div style="left:418px;top:700px;width:1px;height:24px;background:#686868"></div>
<div style="left:449px;top:700px;width:1px;height:24px;background:#686868"></div>
<div style="left:479px;top:700px;width:1px;height:24px;background:#686868"></div>
<div style="left:510px;top:700px;width:1px;height:24px;background:#686868"></div>
<div style="left:540px;top:700px;width:1px;height:24px;background:#686868"></div>
<div style="left:570px;top:700px;width:1px;height:24px;background:#686868"></div>
<div style="left:601px;top:700px;width:1px;height:24px;background:#686868"></div>
<div style="left:631px;top:700px;width:1px;height:24px;background:#686868"></div>
<div style="left:662px;top:700px;width:1px;height:24px;background:#686868"></div>
<div style="left:692px;top:700px;width:1px;height:24px;background:#686868"></div>
<div style="left:722px;top:700px;width:1px;height:24px;background:#686868"></div>
<div style="left:753px;top:700px;width:1px;height:24px;background:#686868"></div>
<div style="left:783px;top:700px;width:1px;height:24px;background:#686868"></div>
<div style="left:814px;top:700px;width:1px;height:24px;background:#686868"></div>
<div style="left:844px;top:700px;width:1px;height:24px;background:#686868"></div>
<div style="left:874px;top:700px;width:1px;height:24px;background:#686868"></div>
<div style="left:905px;top:700px;width:1px;height:24px;background:#686868"></div>
<div style="left:935px;top:700px;width:1px;height:24px;background:#686868"></div>
<div style="left:966px;top:700px;width:1px;height:24px;background:#3b3b3b"></div>
<div style="left:996px;top:700px;width:1px;height:24px;background:#3b3b3b"></div>
<div style="left:1026px;top:700px;width:1px;height:24px;background:#3b3b3b"></div>
<div style="left:176px;top:700px;width:2px;height:24px;background:#2e2e2e"></div>
<div style="left:178px;top:700px;width:3px;height:24px;background:#60c040"></div>
<div style="left:0px;top:724px;width:1036px;height:18px;background:#727272"></div>
<div style="left:0px;top:742px;width:1036px;height:1px;background:#808080"></div>
<div style="left:0px;top:743px;width:1036px;height:25px;background:#6b6b6b"></div>
<div style="left:0px;top:766px;width:65px;height:2px;background:#111"></div>
<div style="left:293px;top:766px;width:743px;height:2px;background:#0c0c0c"></div>
<div style="left:4px;top:725px;width:1027px;height:13px;border:1px solid #3a3a3a;border-radius:6.5px;background:linear-gradient(#8a8a8a,#a0a0a0 55%,#8c8c8c)"></div>
<div style="left:5px;top:726px;width:11px;height:11px;border-radius:5.5px;background:#6a6a6a"></div>
<div style="left:1019px;top:726px;width:11px;height:11px;border-radius:5.5px;background:#6a6a6a"></div>
<span class="t " style="left:45.8px;top:726px;letter-spacing:-0.323px;">-40</span>
<span class="t " style="left:105.6px;top:726px;letter-spacing:-0.323px;">-20</span>
<span class="t " style="left:174.8px;top:726px;letter-spacing:0.0px;">0</span>
<span class="t " style="left:230.8px;top:726px;letter-spacing:0.0px;">20</span>
<span class="t " style="left:290.9px;top:726px;letter-spacing:0.0px;">40</span>
<span class="t " style="left:350.8px;top:726px;letter-spacing:0.0px;">60</span>
<span class="t " style="left:411.0px;top:726px;letter-spacing:0.0px;">80</span>
<span class="t " style="left:468.2px;top:726px;letter-spacing:0.0px;">100</span>
<span class="t " style="left:528.0px;top:726px;letter-spacing:0.0px;">120</span>
<span class="t " style="left:587.7px;top:726px;letter-spacing:0.0px;">140</span>
<span class="t " style="left:648.0px;top:726px;letter-spacing:0.0px;">160</span>
<span class="t " style="left:707.9px;top:726px;letter-spacing:0.0px;">180</span>
<span class="t " style="left:769.1px;top:726px;letter-spacing:0.0px;">200</span>
<span class="t " style="left:829.3px;top:726px;letter-spacing:0.0px;">220</span>
<span class="t " style="left:889.5px;top:726px;letter-spacing:0.0px;">240</span>
<span class="t " style="left:949.7px;top:726px;letter-spacing:0.0px;">260</span>
<div class="menu" style="left:9px;top:745px;width:30px;height:20px;"></div>
<svg style="left:28.8px;top:748.5px" width="7" height="13" viewBox="0 0 7 13"><path d="M0.500 4.800L3.300 0L6.100 4.800z" fill="#9c9c9c"/><path d="M0.500 7.400L3.300 12.300L6.100 7.400z" fill="#9c9c9c" opacity="0.85"/></svg>
<svg style="left:12px;top:747px" width="16" height="16" viewBox="0 0 16 16"><circle cx="8" cy="8" r="6.500" fill="#ececec" stroke="#1e1e1e" stroke-width="1"/><path d="M8 8l3-3.500" stroke="#222" stroke-width="1"/><path d="M8 8l2 3" stroke="#e01010" stroke-width="1.200"/></svg>
<span class="t " style="left:51px;top:750px;letter-spacing:-0.338px;">View</span>
<span class="t " style="left:96px;top:750px;letter-spacing:-0.568px;">Marker</span>
<span class="t " style="left:151px;top:750px;letter-spacing:-0.616px;">Frame</span>
<span class="t " style="left:203px;top:750px;letter-spacing:-0.51px;">Playback</span>
<div class="tool rl" style="left:262px;top:745px;width:20px;height:20px;"></div>
<svg style="left:264px;top:747px" width="16" height="16" viewBox="0 0 16 16"><circle cx="8" cy="8" r="6.500" fill="#ececec" stroke="#1e1e1e" stroke-width="1"/><path d="M8 8V1.800A6.200 6.200 0 0 1 14.200 8z" fill="#f8a000"/><path d="M8 8V2M8 8h6" stroke="#222" stroke-width="0.800"/><path d="M8 8l-2.500 3" stroke="#e01010" stroke-width="1.200"/></svg>
<div class="tool rr" style="left:281px;top:745px;width:20px;height:20px;"></div>
<svg style="left:283px;top:747px" width="16" height="16" viewBox="0 0 16 16"><path d="M4.800 7.500V5a3.200 3.200 0 0 1 6.400 0v2.500" fill="none" stroke="#222" stroke-width="2.600"/><path d="M4.800 7.500V5a3.200 3.200 0 0 1 6.400 0v2.500" fill="none" stroke="#e8e8e8" stroke-width="1.300"/><rect x="2.800" y="7.300" width="10.400" height="7" rx="0.800" fill="#ececec" stroke="#222" stroke-width="0.800"/><path d="M3.500 9.500h9M3.500 12h9" stroke="#aaa" stroke-width="0.700"/><rect x="7.400" y="9.800" width="1.200" height="2" fill="#222"/></svg>
<div class="num" style="left:306px;top:745px;width:117px;height:20px;border-radius:10px 0 0 10px"></div>
<svg style="left:312px;top:751px" width="5" height="8" viewBox="0 0 5 8"><path d="M4.500 0.500v7L0.500 4z" fill="#6e6e6e"/></svg>
<svg style="left:412px;top:751px" width="5" height="8" viewBox="0 0 5 8"><path d="M0.500 0.500v7L4.500 4z" fill="#6e6e6e"/></svg>
<span class="t " style="left:322px;top:750px;letter-spacing:-0.595px;">Start:</span>
<span class="t " style="right:959px;top:750px;letter-spacing:0.0px;">1</span>
<div class="num" style="left:422px;top:745px;width:112px;height:20px;border-radius:0 10px 10px 0"></div>
<svg style="left:428px;top:751px" width="5" height="8" viewBox="0 0 5 8"><path d="M4.500 0.500v7L0.500 4z" fill="#6e6e6e"/></svg>
<svg style="left:523px;top:751px" width="5" height="8" viewBox="0 0 5 8"><path d="M0.500 0.500v7L4.500 4z" fill="#6e6e6e"/></svg>
<span class="t " style="left:438px;top:750px;letter-spacing:-0.902px;">End:</span>
<span class="t " style="right:848px;top:750px;letter-spacing:0.0px;">250</span>
<div class="num" style="left:539px;top:745px;width:90px;height:20px;"></div>
<svg style="left:545px;top:751px" width="5" height="8" viewBox="0 0 5 8"><path d="M4.500 0.500v7L0.500 4z" fill="#6e6e6e"/></svg>
<svg style="left:618px;top:751px" width="5" height="8" viewBox="0 0 5 8"><path d="M0.500 0.500v7L4.500 4z" fill="#6e6e6e"/></svg>
<span class="t " style="right:753px;top:750px;letter-spacing:0.0px;">1</span>
<div class="tool rl" style="left:646px;top:745px;width:20px;height:20px;"></div>
<svg style="left:648px;top:747px" width="16" height="16" viewBox="0 0 16 16"><path d="M2.500 4v8" stroke="#222" stroke-width="2.600"/><path d="M2.500 4.500v7" stroke="#fff" stroke-width="1.300"/><path d="M9.500 3.500v9L3.500 8zM15.500 3.500v9L9.500 8z" fill="#f4f4f4" stroke="#222" stroke-width="0.800"/></svg>
<div class="tool " style="left:665px;top:745px;width:21px;height:20px;"></div>
<svg style="left:667px;top:747px" width="16" height="16" viewBox="0 0 16 16"><path d="M8 3.500v9L1.500 8zM14.500 3.500v9L8 8z" fill="#f4f4f4" stroke="#222" stroke-width="0.800"/></svg>
<div class="tool " style="left:685px;top:745px;width:21px;height:20px;"></div>
<svg style="left:687px;top:747px" width="16" height="16" viewBox="0 0 16 16"><path d="M13.500 1.500v13L2 8z" fill="#f4f4f4" stroke="#222" stroke-width="0.900"/></svg>
<div class="tool " style="left:705px;top:745px;width:21px;height:20px;"></div>
<svg style="left:707px;top:747px" width="16" height="16" viewBox="0 0 16 16"><path d="M2.500 1.500v13L14 8z" fill="#f4f4f4" stroke="#222" stroke-width="0.900"/></svg>
<div class="tool " style="left:725px;top:745px;width:21px;height:20px;"></div>
<svg style="left:727px;top:747px" width="16" height="16" viewBox="0 0 16 16"><path d="M1.500 3.500v9L8 8zM8 3.500v9L14.500 8z" fill="#f4f4f4" stroke="#222" stroke-width="0.800"/></svg>
<div class="tool rr" style="left:745px;top:745px;width:20px;height:20px;"></div>
<svg style="left:747px;top:747px" width="16" height="16" viewBox="0 0 16 16"><path d="M13.500 4v8" stroke="#222" stroke-width="2.600"/><path d="M13.500 4.500v7" stroke="#fff" stroke-width="1.300"/><path d="M0.500 3.500v9L6.500 8zM6.500 3.500v9L12.500 8z" fill="#f4f4f4" stroke="#222" stroke-width="0.800"/></svg>
<div class="menu" style="left:770px;top:745px;width:115px;height:20px;"></div>
<span class="t w" style="left:778px;top:750px;letter-spacing:-0.567px;">No Sync</span>
<svg style="left:874.8px;top:748.5px" width="7" height="13" viewBox="0 0 7 13"><path d="M0.500 4.800L3.300 0L6.100 4.800z" fill="#9c9c9c"/><path d="M0.500 7.400L3.300 12.300L6.100 7.400z" fill="#9c9c9c" opacity="0.85"/></svg>
<div class="tool r4" style="left:901px;top:745px;width:20px;height:20px;"></div>
<svg style="left:903px;top:747px" width="16" height="16" viewBox="0 0 16 16"><circle cx="8" cy="8" r="5" fill="#e03410" stroke="#5a1408" stroke-width="0.900"/><circle cx="6.800" cy="6.500" r="1.800" fill="#f07050" opacity="0.700"/></svg>
<div class="menu" style="left:926px;top:745px;width:35px;height:20px;"></div>
<svg style="left:930px;top:747px" width="16" height="16" viewBox="0 0 16 16"><path d="M8 2.500L13.500 8L8 13.500L2.500 8z" fill="#f8b020" stroke="#3a2a08" stroke-width="0.800"/></svg>
<svg style="left:950.8px;top:748.5px" width="7" height="13" viewBox="0 0 7 13"><path d="M0.500 4.800L3.300 0L6.100 4.800z" fill="#9c9c9c"/><path d="M0.500 7.400L3.300 12.300L6.100 7.400z" fill="#9c9c9c" opacity="0.85"/></svg>
<div class="txf rl" style="left:967px;top:745px;width:80px;height:20px;"></div>
<svg style="left:970px;top:747px" width="16" height="16" viewBox="0 0 16 16"><g fill="none"><path d="M8.500 13L14.500 6.500M12.300 9l1.500 1.300M13.800 7.300l1.300 1.200" stroke="#333" stroke-width="2.400"/><path d="M8.500 13L14.500 6.500M12.300 9l1.500 1.300M13.800 7.300l1.300 1.200" stroke="#f0f0f0" stroke-width="1.200"/><circle cx="7.800" cy="13.300" r="1.700" stroke="#333" stroke-width="2.400"/><circle cx="7.800" cy="13.300" r="1.700" stroke="#f0f0f0" stroke-width="1.200"/><path d="M4.500 9.500V1.300h2.800M4.500 4h1.800" stroke="#333" stroke-width="2.600"/><path d="M4.500 9.500V1.300h2.800M4.500 4h1.800" stroke="#f0e080" stroke-width="1.300"/><circle cx="4.500" cy="11.800" r="2.300" stroke="#333" stroke-width="2.600"/><circle cx="4.500" cy="11.800" r="2.300" stroke="#f0e080" stroke-width="1.300"/></g></svg>
<svg style="left:0px;top:756px" width="12" height="12" viewBox="0 0 12 12"><path d="M0 0L12 12" stroke="#000" stroke-opacity="0.8" stroke-width="1"/><path d="M0 1.4L10.6 12" stroke="#fff" stroke-opacity="0.75" stroke-width="1"/><path d="M0 3L9 12" stroke="#000" stroke-opacity="0.8" stroke-width="1"/><path d="M0 4.4L7.6 12" stroke="#fff" stroke-opacity="0.6" stroke-width="1"/><path d="M0 6L6 12" stroke="#000" stroke-opacity="0.8" stroke-width="1"/><path d="M0 7.4L4.6 12" stroke="#fff" stroke-opacity="0.45" stroke-width="1"/><path d="M0 9L3 12" stroke="#000" stroke-opacity="0.8" stroke-width="1"/><path d="M0 10.4L1.6 12" stroke="#fff" stroke-opacity="0.3" stroke-width="1"/></svg>
<svg style="left:1024px;top:700px" width="12" height="12" viewBox="0 0 12 12"><path d="M0 0L12 12" stroke="#000" stroke-opacity="0.8" stroke-width="1"/><path d="M1.4 0L12 10.6" stroke="#fff" stroke-opacity="0.75" stroke-width="1"/><path d="M3 0L12 9" stroke="#000" stroke-opacity="0.8" stroke-width="1"/><path d="M4.4 0L12 7.6" stroke="#fff" stroke-opacity="0.6" stroke-width="1"/><path d="M6 0L12 6" stroke="#000" stroke-opacity="0.8" stroke-width="1"/><path d="M7.4 0L12 4.6" stroke="#fff" stroke-opacity="0.45" stroke-width="1"/><path d="M9 0L12 3" stroke="#000" stroke-opacity="0.8" stroke-width="1"/><path d="M10.4 0L12 1.6" stroke="#fff" stroke-opacity="0.3" stroke-width="1"/></svg>
<div style="left:1036px;top:50px;width:1px;height:718px;background:#0c0c0c"></div>
<div style="left:1037px;top:50px;width:329px;height:26px;background:#6b6b6b"></div>
<div style="left:1037px;top:50px;width:329px;height:1px;background:#7c7c7c"></div>
<div style="left:1037px;top:76px;width:329px;height:1px;background:#5c5c5c"></div>
<div style="left:1037px;top:77px;width:329px;height:91px;background:#727272"></div>
<div style="left:1037px;top:78px;width:271px;height:18px;background:#888e93"></div>
<div style="left:1037px;top:96px;width:329px;height:21px;background:#777"></div>
<div style="left:1037px;top:117px;width:329px;height:20px;background:#707070"></div>
<div style="left:1037px;top:137px;width:329px;height:21px;background:#777"></div>
<div style="left:1307px;top:77px;width:1px;height:90px;background:#686868"></div>
<div style="left:1327px;top:77px;width:1px;height:90px;background:#686868"></div>
<div style="left:1347px;top:77px;width:1px;height:90px;background:#686868"></div>
<div class="menu" style="left:1046px;top:53px;width:30px;height:20px;"></div>
<svg style="left:1065.8px;top:56.5px" width="7" height="13" viewBox="0 0 7 13"><path d="M0.500 4.800L3.300 0L6.100 4.800z" fill="#9c9c9c"/><path d="M0.500 7.400L3.300 12.300L6.100 7.400z" fill="#9c9c9c" opacity="0.85"/></svg>
<svg style="left:1049px;top:55px" width="16" height="16" viewBox="0 0 16 16"><path d="M3.500 4v9h4M3.500 8.500h4" stroke="#eee" stroke-width="1.200" fill="none"/><rect x="1.500" y="1.500" width="7" height="3" fill="#f4a030" stroke="#fff" stroke-width="0.700"/><rect x="8" y="7" width="6" height="2.600" fill="#ddd" stroke="#fff" stroke-width="0.600"/><rect x="8" y="11.600" width="6" height="2.600" fill="#ddd" stroke="#fff" stroke-width="0.600"/></svg>
<span class="t " style="left:1088px;top:58px;letter-spacing:-0.338px;">View</span>
<span class="t " style="left:1133px;top:58px;letter-spacing:-0.672px;">Search</span>
<div class="menu" style="left:1180px;top:53px;width:119px;height:20px;"></div>
<span class="t w" style="left:1188px;top:58px;letter-spacing:-0.541px;">All Scenes</span>
<svg style="left:1288.8px;top:56.5px" width="7" height="13" viewBox="0 0 7 13"><path d="M0.500 4.800L3.300 0L6.100 4.800z" fill="#9c9c9c"/><path d="M0.500 7.400L3.300 12.300L6.100 7.400z" fill="#9c9c9c" opacity="0.85"/></svg>
<div class="txf" style="left:1304px;top:53px;width:70px;height:20px;border-radius:4px 0 0 4px"></div>
<svg style="left:1308px;top:55px" width="16" height="16" viewBox="0 0 16 16"><path d="M2 14.500L7 9" stroke="#4a2a10" stroke-width="3" stroke-linecap="round"/><path d="M2 14.500L7 9" stroke="#c87828" stroke-width="1.600" stroke-linecap="round"/><circle cx="10" cy="6" r="4.600" fill="#e8eef4" stroke="#444" stroke-width="1.100"/><circle cx="9" cy="5" r="2" fill="#fff"/></svg>
<svg style="left:1040px;top:78px" width="60" height="80" viewBox="0 0 60 80"><path d="M9 8.500h10M24.500 17v51.500h14" stroke="#3a3a3a" stroke-width="1" fill="none"/><g fill="#e8e8e8" stroke="#222" stroke-width="0.900"><circle cx="5" cy="8.500" r="3.700"/><circle cx="30.500" cy="28.500" r="3.700"/><circle cx="25.500" cy="68.500" r="3.700"/></g><path d="M3 8.500h4M28.500 28.500h4M30.500 26.500v4M23.500 68.500h4M25.500 66.500v4" stroke="#111" stroke-width="1.100"/></svg>
<div style="left:1057px;top:78px;width:19px;height:19px;border-radius:10px;background:rgba(255,255,255,.3)"></div>
<svg style="left:1059px;top:79px" width="16" height="16" viewBox="0 0 16 16"><circle cx="3.500" cy="3" r="1.800" fill="#f8f8c0" stroke="#c8c860" stroke-width="0.600"/><path d="M9 2.500v9a3 1.300 0 0 0 6 0v-9z" fill="url(#gc)" stroke="#1c3c78" stroke-width="0.500"/><ellipse cx="12" cy="2.500" rx="3" ry="1.300" fill="#cfe2fa" stroke="#1c3c78" stroke-width="0.500"/><circle cx="6.500" cy="11" r="4" fill="url(#gs)" stroke="#333" stroke-width="0.600"/></svg>
<svg style="left:1079px;top:99px" width="16" height="16" viewBox="0 0 16 16"><rect x="4.500" y="4.500" width="10" height="9.500" fill="#e8dcc0" stroke="#333" stroke-width="0.700" transform="rotate(12 9 9)"/><rect x="1.500" y="1.500" width="10.500" height="10" fill="#f4f4f4" stroke="#222" stroke-width="0.800"/><rect x="7" y="3" width="2.800" height="5" fill="#3c6cd0"/><circle cx="5.300" cy="8" r="1.800" fill="#ddd" stroke="#333" stroke-width="0.500"/><circle cx="3.300" cy="3.300" r="1" fill="#f0d840"/></svg>
<div style="left:1077px;top:117px;width:19px;height:19px;border-radius:10px;background:rgba(200,200,230,.45)"></div>
<svg style="left:1079px;top:119px" width="16" height="16" viewBox="0 0 16 16"><circle cx="8" cy="8" r="6.600" fill="url(#gw)" stroke="#1c3460" stroke-width="0.900"/><path d="M4 4.500q2-2 4-1.200q1.500 1-.5 2q-1 1.500-2.500 1.200q-1.500-.500-1-2zM8.500 8q2.500-1 4 .500q.500 2.500-1.500 4q-2 .500-2-1.500q-1.500-1.500-.500-3zM3 9.500q1.500.500 2 2q-.500 1.500-1.500.500z" fill="#4a9038"/></svg>
<div style="left:1077px;top:137px;width:19px;height:19px;border-radius:10px;background:#c89048"></div>
<svg style="left:1079px;top:139px" width="16" height="16" viewBox="0 0 16 16"><path d="M3 3.500h10L8 13.500z" fill="none" stroke="#a04808" stroke-width="2.600" stroke-linejoin="round"/><path d="M3 3.500h10L8 13.500z" fill="none" stroke="#ffb050" stroke-width="1.300"/><g fill="#fff" stroke="#a04808" stroke-width="0.500"><circle cx="3" cy="3.500" r="1.400"/><circle cx="13" cy="3.500" r="1.400"/><circle cx="8" cy="13.500" r="1.400"/></g></svg>
<span class="t " style="left:1078px;top:82px;letter-spacing:-0.708px;">Scene</span>
<span class="t " style="left:1098px;top:102px;letter-spacing:-0.671px;">RenderLayers</span>
<span class="t " style="left:1098px;top:122px;letter-spacing:-0.634px;">World</span>
<span class="t w" style="left:1098px;top:142px;letter-spacing:-0.501px;">WallTile1:Mesh</span>
<div style="left:1176px;top:101px;width:2px;height:11px;background:#333;opacity:.8"></div>
<div style="left:1184px;top:141px;width:2px;height:11px;background:#333;opacity:.8"></div>
<div style="left:1186px;top:97px;width:19px;height:19px;border-radius:10px;background:rgba(255,255,255,.25)"></div>
<svg style="left:1188px;top:99px" width="16" height="16" viewBox="0 0 16 16"><rect x="4.500" y="4.500" width="10" height="9.500" fill="#e8dcc0" stroke="#333" stroke-width="0.700" transform="rotate(12 9 9)"/><rect x="1.500" y="1.500" width="10.500" height="10" fill="#f4f4f4" stroke="#222" stroke-width="0.800"/><rect x="7" y="3" width="2.800" height="5" fill="#3c6cd0"/><circle cx="5.300" cy="8" r="1.800" fill="#ddd" stroke="#333" stroke-width="0.500"/><circle cx="3.300" cy="3.300" r="1" fill="#f0d840"/></svg>
<svg style="left:1196px;top:139px" width="16" height="16" viewBox="0 0 16 16"><path d="M3 3.500h10L8 13.500z" fill="none" stroke="#2c2c2c" stroke-width="1.100"/><g fill="#e0e0e0" stroke="#2c2c2c" stroke-width="0.600"><circle cx="3" cy="3.500" r="1.500"/><circle cx="13" cy="3.500" r="1.500"/><circle cx="8" cy="13.500" r="1.500"/></g></svg>
<svg style="left:1309px;top:139px" width="16" height="16" viewBox="0 0 16 16"><path d="M1 8.500Q8 1.500 15 8.500Q8 14 1 8.500z" fill="#f0f0f0" stroke="#222" stroke-width="1"/><circle cx="8" cy="8" r="2.600" fill="#333"/><circle cx="7.300" cy="7.300" r="0.800" fill="#fff"/></svg>
<svg style="left:1329px;top:139px" width="16" height="16" viewBox="0 0 16 16"><path d="M4 1.500v11.500l2.800-2.500l2 4.500l2-1l-2-4.300h3.700z" fill="#fff" stroke="#111" stroke-width="1" stroke-linejoin="round"/></svg>
<svg style="left:1348px;top:139px" width="16" height="16" viewBox="0 0 16 16"><rect x="2" y="5" width="12" height="8.500" rx="1" fill="#3c3c3c" stroke="#111" stroke-width="0.800"/><rect x="3.500" y="3" width="3.500" height="2" fill="#ddd" stroke="#222" stroke-width="0.500"/><circle cx="9" cy="9.300" r="3" fill="#d8d8d8" stroke="#222" stroke-width="0.600"/><circle cx="9" cy="9.300" r="1.600" fill="#444"/></svg>
<svg style="left:1037px;top:156px" width="12" height="12" viewBox="0 0 12 12"><path d="M0 0L12 12" stroke="#000" stroke-opacity="0.8" stroke-width="1"/><path d="M0 1.4L10.6 12" stroke="#fff" stroke-opacity="0.75" stroke-width="1"/><path d="M0 3L9 12" stroke="#000" stroke-opacity="0.8" stroke-width="1"/><path d="M0 4.4L7.6 12" stroke="#fff" stroke-opacity="0.6" stroke-width="1"/><path d="M0 6L6 12" stroke="#000" stroke-opacity="0.8" stroke-width="1"/><path d="M0 7.4L4.6 12" stroke="#fff" stroke-opacity="0.45" stroke-width="1"/><path d="M0 9L3 12" stroke="#000" stroke-opacity="0.8" stroke-width="1"/><path d="M0 10.4L1.6 12" stroke="#fff" stroke-opacity="0.3" stroke-width="1"/></svg>
<svg style="left:1354px;top:50px" width="12" height="12" viewBox="0 0 12 12"><path d="M0 0L12 12" stroke="#000" stroke-opacity="0.8" stroke-width="1"/><path d="M1.4 0L12 10.6" stroke="#fff" stroke-opacity="0.75" stroke-width="1"/><path d="M3 0L12 9" stroke="#000" stroke-opacity="0.8" stroke-width="1"/><path d="M4.4 0L12 7.6" stroke="#fff" stroke-opacity="0.6" stroke-width="1"/><path d="M6 0L12 6" stroke="#000" stroke-opacity="0.8" stroke-width="1"/><path d="M7.4 0L12 4.6" stroke="#fff" stroke-opacity="0.45" stroke-width="1"/><path d="M9 0L12 3" stroke="#000" stroke-opacity="0.8" stroke-width="1"/><path d="M10.4 0L12 1.6" stroke="#fff" stroke-opacity="0.3" stroke-width="1"/></svg>
<div style="left:1037px;top:168px;width:329px;height:1px;background:#0c0c0c"></div>
<div style="left:1037px;top:169px;width:329px;height:26px;background:#6b6b6b"></div>
<div style="left:1037px;top:169px;width:329px;height:1px;background:#848484"></div>
<div style="left:1037px;top:195px;width:329px;height:1px;background:#808080"></div>
<div style="left:1037px;top:196px;width:329px;height:572px;background:#727272"></div>
<div class="menu" style="left:1046px;top:172px;width:30px;height:20px;"></div>
<svg style="left:1065.8px;top:175.5px" width="7" height="13" viewBox="0 0 7 13"><path d="M0.500 4.800L3.300 0L6.100 4.800z" fill="#9c9c9c"/><path d="M0.500 7.400L3.300 12.300L6.100 7.400z" fill="#9c9c9c" opacity="0.85"/></svg>
<svg style="left:1049px;top:174px" width="16" height="16" viewBox="0 0 16 16"><rect x="1.500" y="2.500" width="13" height="4" rx="1.500" fill="#555" stroke="#eee" stroke-width="0.900"/><rect x="9.500" y="3" width="4.500" height="3" rx="1" fill="#eee"/><rect x="1.500" y="9.500" width="13" height="4.500" rx="1.500" fill="#f4f4f4" stroke="#eee" stroke-width="0.900"/><path d="M3 11.800l1.800-1.500v3zM13 11.800l-1.800-1.500v3z" fill="#333"/></svg>
<div class="rad rl" style="left:1084px;top:172px;width:21px;height:20px;"></div>
<svg style="left:1086.5px;top:174.5px;opacity:0.7" width="15" height="15" viewBox="0 0 16 16"><rect x="1" y="4" width="13" height="9.500" rx="1" fill="#3c3c3c" stroke="#111" stroke-width="0.800"/><path d="M1.500 5.500h12" stroke="#d8d8d8" stroke-width="1.600"/><rect x="2.300" y="2.500" width="3" height="1.800" fill="#ddd" stroke="#222" stroke-width="0.500"/><circle cx="9" cy="9.500" r="3.500" fill="#c8c8c8" stroke="#222" stroke-width="0.600"/><circle cx="9" cy="9.500" r="2.300" fill="#6a1c1c"/><circle cx="8.300" cy="8.800" r="0.800" fill="#e0a0a0"/><rect x="3" y="5" width="1.300" height="1.300" fill="#e01010"/></svg>
<div class="rad" style="left:1104px;top:172px;width:21px;height:20px;"></div>
<svg style="left:1106.5px;top:174.5px;opacity:0.7" width="15" height="15" viewBox="0 0 16 16"><rect x="4.500" y="4.500" width="10" height="9.500" fill="#e8dcc0" stroke="#333" stroke-width="0.700" transform="rotate(12 9 9)"/><rect x="1.500" y="1.500" width="10.500" height="10" fill="#f4f4f4" stroke="#222" stroke-width="0.800"/><rect x="7" y="3" width="2.800" height="5" fill="#3c6cd0"/><circle cx="5.300" cy="8" r="1.800" fill="#ddd" stroke="#333" stroke-width="0.500"/><circle cx="3.300" cy="3.300" r="1" fill="#f0d840"/></svg>
<div class="rad" style="left:1124px;top:172px;width:21px;height:20px;"></div>
<svg style="left:1126.5px;top:174.5px;opacity:0.7" width="15" height="15" viewBox="0 0 16 16"><circle cx="3.500" cy="3" r="1.800" fill="#f8f8c0" stroke="#c8c860" stroke-width="0.600"/><path d="M9 2.500v9a3 1.300 0 0 0 6 0v-9z" fill="url(#gc)" stroke="#1c3c78" stroke-width="0.500"/><ellipse cx="12" cy="2.500" rx="3" ry="1.300" fill="#cfe2fa" stroke="#1c3c78" stroke-width="0.500"/><circle cx="6.500" cy="11" r="4" fill="url(#gs)" stroke="#333" stroke-width="0.600"/></svg>
<div class="rad" style="left:1144px;top:172px;width:21px;height:20px;"></div>
<svg style="left:1146.5px;top:174.5px;opacity:0.7" width="15" height="15" viewBox="0 0 16 16"><circle cx="8" cy="8" r="6.600" fill="url(#gw)" stroke="#1c3460" stroke-width="0.900"/><path d="M4 4.500q2-2 4-1.200q1.500 1-.5 2q-1 1.500-2.500 1.200q-1.500-.500-1-2zM8.500 8q2.500-1 4 .500q.500 2.500-1.500 4q-2 .500-2-1.500q-1.500-1.500-.500-3zM3 9.500q1.500.500 2 2q-.500 1.500-1.500.500z" fill="#4a9038"/></svg>
<div class="rad" style="left:1164px;top:172px;width:21px;height:20px;"></div>
<svg style="left:1166.5px;top:174.5px;opacity:0.7" width="15" height="15" viewBox="0 0 16 16"><path d="M1.500 4.200L8 1.500l6.500 2.700v7.600L8 15l-6.500-3.200z" fill="#e8902a" stroke="#fff" stroke-width="0.900" stroke-linejoin="round"/><path d="M8 7l6.500-2.800v7.600L8 15z" fill="#b86a14"/><path d="M1.500 4.200L8 1.500l6.500 2.700L8 7z" fill="#f8d4a0"/><path d="M1.500 4.200L8 7l6.500-2.800M8 7v8" stroke="#fff" stroke-width="0.700" fill="none"/><path d="M1.500 4.200L8 1.500l6.500 2.700v7.600L8 15l-6.500-3.200z" fill="none" stroke="#5a3208" stroke-width="0.400"/></svg>
<div class="rad" style="left:1184px;top:172px;width:21px;height:20px;"></div>
<svg style="left:1186.5px;top:174.5px;opacity:0.7" width="15" height="15" viewBox="0 0 16 16"><g fill="none" transform="rotate(-35 8 8)"><rect x="0.500" y="5" width="8.500" height="6" rx="3" stroke="#2a2a2a" stroke-width="2.800"/><rect x="7" y="5" width="8.500" height="6" rx="3" stroke="#2a2a2a" stroke-width="2.800"/><rect x="0.500" y="5" width="8.500" height="6" rx="3" stroke="#b4b4b4" stroke-width="1.400"/><rect x="7" y="5" width="8.500" height="6" rx="3" stroke="#b4b4b4" stroke-width="1.400"/></g></svg>
<div class="rad" style="left:1204px;top:172px;width:20px;height:20px;"></div>
<svg style="left:1206.5px;top:174.5px;opacity:0.7" width="15" height="15" viewBox="0 0 16 16"><path d="M2.500 14.500a1.300 1.300 0 0 1-1-2L8 6a3.800 3.800 0 0 1 5-4.500L10.800 3.800l.4 1.800l1.800.400L15 3.800A3.800 3.800 0 0 1 10.300 8.500z" fill="#5c84c0" stroke="#1c2c48" stroke-width="0.800" stroke-linejoin="round"/></svg>
<div class="rad" style="left:1223px;top:172px;width:21px;height:20px;"></div>
<svg style="left:1225.5px;top:174.5px;opacity:0.7" width="15" height="15" viewBox="0 0 16 16"><path d="M3 3.500h10L8 13.500z" fill="none" stroke="#2c2c2c" stroke-width="1.100"/><g fill="#e0e0e0" stroke="#2c2c2c" stroke-width="0.600"><circle cx="3" cy="3.500" r="1.500"/><circle cx="13" cy="3.500" r="1.500"/><circle cx="8" cy="13.500" r="1.500"/></g></svg>
<div class="rad sel" style="left:1243px;top:172px;width:21px;height:20px;"></div>
<svg style="left:1245.5px;top:174.5px" width="15" height="15" viewBox="0 0 16 16"><circle cx="8" cy="8" r="6.500" fill="url(#gs)" stroke="#222" stroke-width="0.900"/><path d="M8 8V1.500A6.500 6.500 0 0 1 14.500 8zM8 8v6.500A6.500 6.500 0 0 1 1.500 8z" fill="#b4503c" opacity="0.800"/><circle cx="5.800" cy="5.300" r="2.200" fill="#fff" opacity="0.600"/></svg>
<div class="rad" style="left:1263px;top:172px;width:21px;height:20px;"></div>
<svg style="left:1265.5px;top:174.5px;opacity:0.7" width="15" height="15" viewBox="0 0 16 16"><rect x="1.500" y="1.500" width="13" height="13" fill="#e4e4e4" stroke="#444" stroke-width="0.800"/><g fill="#a02818"><rect x="2" y="2" width="3" height="3"/><rect x="8" y="2" width="3" height="3"/><rect x="5" y="5" width="3" height="3"/><rect x="11" y="5" width="3" height="3"/><rect x="2" y="8" width="3" height="3"/><rect x="8" y="8" width="3" height="3"/><rect x="5" y="11" width="3" height="3"/><rect x="11" y="11" width="3" height="3"/></g></svg>
<div class="rad" style="left:1283px;top:172px;width:21px;height:20px;"></div>
<svg style="left:1285.5px;top:174.5px;opacity:0.7" width="15" height="15" viewBox="0 0 16 16"><path d="M4.2 1.0L4.712 3.688L7.4 4.2L4.712 4.712L4.2 7.4L3.688 4.712L1.0 4.2L3.688 3.688z" fill="#fffbe0" stroke="#b89828" stroke-width="0.450"/><circle cx="4.2" cy="4.2" r="0.90" fill="#fff"/><path d="M11.5 0.19999999999999973L12.076 3.2239999999999998L15.1 3.8L12.076 4.3759999999999994L11.5 7.4L10.924 4.3759999999999994L7.9 3.8L10.924 3.2239999999999998z" fill="#fffbe0" stroke="#b89828" stroke-width="0.450"/><circle cx="11.5" cy="3.8" r="1.01" fill="#fff"/><path d="M6 6.4L6.736 10.264L10.6 11L6.736 11.736L6 15.6L5.264 11.736L1.4000000000000004 11L5.264 10.264z" fill="#fffbe0" stroke="#b89828" stroke-width="0.450"/><circle cx="6" cy="11" r="1.29" fill="#fff"/><path d="M12.5 8.5L12.98 11.02L15.5 11.5L12.98 11.98L12.5 14.5L12.02 11.98L9.5 11.5L12.02 11.02z" fill="#fffbe0" stroke="#b89828" stroke-width="0.450"/><circle cx="12.5" cy="11.5" r="0.84" fill="#fff"/></svg>
<div class="rad rr" style="left:1303px;top:172px;width:20px;height:20px;"></div>
<svg style="left:1305.5px;top:174.5px;opacity:0.7" width="15" height="15" viewBox="0 0 16 16"><path d="M2 6.500l5 7.500l6-9.500" fill="none" stroke="#14284c" stroke-width="3.200"/><path d="M2 6.500l5 7.500l6-9.500" fill="none" stroke="#4870b8" stroke-width="1.800"/><circle cx="12.500" cy="3.800" r="3" fill="url(#gs)" stroke="#333" stroke-width="0.500"/></svg>
<svg style="left:1354px;top:169px" width="12" height="12" viewBox="0 0 12 12"><path d="M0 0L12 12" stroke="#000" stroke-opacity="0.8" stroke-width="1"/><path d="M1.4 0L12 10.6" stroke="#fff" stroke-opacity="0.75" stroke-width="1"/><path d="M3 0L12 9" stroke="#000" stroke-opacity="0.8" stroke-width="1"/><path d="M4.4 0L12 7.6" stroke="#fff" stroke-opacity="0.6" stroke-width="1"/><path d="M6 0L12 6" stroke="#000" stroke-opacity="0.8" stroke-width="1"/><path d="M7.4 0L12 4.6" stroke="#fff" stroke-opacity="0.45" stroke-width="1"/><path d="M9 0L12 3" stroke="#000" stroke-opacity="0.8" stroke-width="1"/><path d="M10.4 0L12 1.6" stroke="#fff" stroke-opacity="0.3" stroke-width="1"/></svg>
<svg style="left:1046px;top:205px" width="16" height="16" viewBox="0 0 16 16"><path d="M1 15L6.500 9.500" stroke="#1a1a1a" stroke-width="1.600"/><path d="M1.500 14.500L6.500 9.500" stroke="#ddd" stroke-width="0.600"/><path d="M3 7.200l5.800 5.800l1.200-1.800l-.6-1.600l2.800-2.800l2 .2l1.300-1.300L10.300 0.500L9 1.800l.2 2L6.400 6.600L4.800 6z" fill="#ececec" stroke="#1a1a1a" stroke-width="0.900" stroke-linejoin="round"/><path d="M6.400 6.600l3 3M9.200 3.800l3 3" stroke="#888" stroke-width="0.700"/></svg>
<svg style="left:1070px;top:205px" width="16" height="16" viewBox="0 0 16 16"><circle cx="3.500" cy="3" r="1.800" fill="#f8f8c0" stroke="#c8c860" stroke-width="0.600"/><path d="M9 2.500v9a3 1.300 0 0 0 6 0v-9z" fill="url(#gc)" stroke="#1c3c78" stroke-width="0.500"/><ellipse cx="12" cy="2.500" rx="3" ry="1.300" fill="#cfe2fa" stroke="#1c3c78" stroke-width="0.500"/><circle cx="6.500" cy="11" r="4" fill="url(#gs)" stroke="#333" stroke-width="0.600"/></svg>
<svg style="left:1110px;top:205px" width="16" height="16" viewBox="0 0 16 16"><path d="M1.500 4.200L8 1.500l6.500 2.700v7.600L8 15l-6.500-3.200z" fill="#e8902a" stroke="#fff" stroke-width="0.900" stroke-linejoin="round"/><path d="M8 7l6.500-2.800v7.600L8 15z" fill="#b86a14"/><path d="M1.500 4.200L8 1.500l6.500 2.700L8 7z" fill="#f8d4a0"/><path d="M1.500 4.200L8 7l6.500-2.800M8 7v8" stroke="#fff" stroke-width="0.700" fill="none"/><path d="M1.500 4.200L8 1.500l6.500 2.700v7.600L8 15l-6.500-3.200z" fill="none" stroke="#5a3208" stroke-width="0.400"/></svg>
<svg style="left:1240px;top:205px" width="16" height="16" viewBox="0 0 16 16"><circle cx="8" cy="8" r="6.500" fill="url(#gs)" stroke="#222" stroke-width="0.900"/><path d="M8 8V1.500A6.500 6.500 0 0 1 14.500 8zM8 8v6.500A6.500 6.500 0 0 1 1.500 8z" fill="#b4503c" opacity="0.800"/><circle cx="5.800" cy="5.300" r="2.200" fill="#fff" opacity="0.600"/></svg>
<span class="t " style="left:1128px;top:208px;letter-spacing:-0.501px;">WallTile1:Mesh</span>
<span class="t " style="left:1259px;top:208px;letter-spacing:-0.383px;">lambert1.001</span>
<svg style="left:1090px;top:210px" width="5" height="8" viewBox="0 0 5 8"><path d="M0.500 0.500v7L4.500 4z" fill="#3a3a3a"/></svg>
<svg style="left:1221px;top:210px" width="5" height="8" viewBox="0 0 5 8"><path d="M0.500 0.500v7L4.500 4z" fill="#3a3a3a"/></svg>
<div style="left:1350px;top:200px;width:12px;height:564px;background:#5e5e5e;border-radius:6px"></div>
<div style="left:1350px;top:200px;width:12px;height:268px;background:linear-gradient(90deg,#868686,#7a7a7a);border:1px solid #505050;border-radius:6px"></div>
<div style="left:1045px;top:239px;width:268px;height:43px;border:1px solid #2c2c2c;border-radius:4px;background:#7c7c7c"></div>
<div style="left:1051px;top:248px;width:257px;height:18px;background:#5680c2;border-radius:3px"></div>
<svg style="left:1054px;top:249px" width="16" height="16" viewBox="0 0 16 16"><circle cx="8" cy="8" r="7.200" fill="url(#gm)" stroke="#200" stroke-width="0.400"/></svg>
<span class="t w" style="left:1072.7px;top:252px;letter-spacing:-0.383px;">lambert1.001</span>
<svg style="left:1054px;top:267px" width="10" height="10" viewBox="0 0 10 10"><circle cx="5" cy="5" r="4" fill="#8e8e8e" stroke="#3a3a3a" stroke-width="0.900"/><path d="M5 2.500v5M2.500 5h5" stroke="#2a2a2a" stroke-width="1.100"/></svg>
<div class="tool rt" style="left:1321px;top:239px;width:20px;height:21px;"></div>
<svg style="left:1323px;top:241px" width="16" height="16" viewBox="0 0 16 16"><path d="M8 2.300v11.400M2.300 8h11.400" stroke="#1a1a1a" stroke-width="3.800" fill="none"/><path d="M8 3.100v9.800M3.100 8h9.800" stroke="#f6f6f6" stroke-width="2.100" fill="none"/></svg>
<div class="tool" style="left:1321px;top:259px;width:20px;height:20px;"></div>
<svg style="left:1323px;top:261px" width="16" height="16" viewBox="0 0 16 16"><path d="M2.300 8h11.400" stroke="#1a1a1a" stroke-width="3.800" fill="none"/><path d="M3.100 8h9.800" stroke="#f6f6f6" stroke-width="2.100" fill="none"/></svg>
<div class="menu" style="left:1321px;top:278px;width:20px;height:20px;border-radius:0 0 4px 4px"></div>
<svg style="left:1323px;top:280px" width="16" height="16" viewBox="0 0 16 16"><path d="M4 4.500h9L10 13z" fill="#111" stroke="#e8e8e8" stroke-width="0.700"/><path d="M4.300 4.800h5L9 11z" fill="#111"/></svg>
<svg style="left:1181px;top:269px" width="14" height="7" viewBox="0 0 14 7"><path d="M0 1.500h14M0 4.500h14" stroke="#1a1a1a" stroke-width="1"/><path d="M0 2.500h14M0 5.500h14" stroke="#a8a8a8" stroke-width="1"/></svg>
<div class="menu" style="left:1045px;top:304px;width:32px;height:20px;border-radius:4px 0 0 4px"></div>
<svg style="left:1049px;top:306px" width="16" height="16" viewBox="0 0 16 16"><circle cx="8" cy="8" r="6.500" fill="url(#gs)" stroke="#222" stroke-width="0.900"/><path d="M8 8V1.500A6.500 6.500 0 0 1 14.500 8zM8 8v6.500A6.500 6.500 0 0 1 1.500 8z" fill="#b4503c" opacity="0.800"/><circle cx="5.800" cy="5.300" r="2.200" fill="#fff" opacity="0.600"/></svg>
<svg style="left:1066.3px;top:307.5px" width="7" height="13" viewBox="0 0 7 13"><path d="M0.500 4.800L3.300 0L6.100 4.800z" fill="#c4c4c4"/><path d="M0.500 7.400L3.300 12.300L6.100 7.400z" fill="#c4c4c4" opacity="0.85"/></svg>
<div class="txf" style="left:1076px;top:304px;width:96px;height:20px;"></div>
<span class="t " style="left:1083px;top:309px;letter-spacing:-0.383px;">lambert1.001</span>
<div class="tool" style="left:1171px;top:304px;width:21px;height:20px;"></div>
<span class="t " style="left:1178px;top:309px;letter-spacing:-0.33px;">F</span>
<div class="tool" style="left:1191px;top:304px;width:21px;height:20px;"></div>
<svg style="left:1194px;top:306px" width="16" height="16" viewBox="0 0 16 16"><path d="M8 2.300v11.400M2.300 8h11.400" stroke="#1a1a1a" stroke-width="3.800" fill="none"/><path d="M8 3.100v9.800M3.100 8h9.800" stroke="#f6f6f6" stroke-width="2.100" fill="none"/></svg>
<div class="tool rr" style="left:1211px;top:304px;width:21px;height:20px;"></div>
<svg style="left:1214px;top:306px" width="16" height="16" viewBox="0 0 16 16"><path d="M3.400 3.400l9.200 9.200M12.600 3.400l-9.200 9.200" stroke="#1a1a1a" stroke-width="3.800" fill="none"/><path d="M4 4l8 8M12 4l-8 8" stroke="#f6f6f6" stroke-width="2.100" fill="none"/></svg>
<div class="tool r4" style="left:1240px;top:304px;width:20px;height:20px;"></div>
<svg style="left:1242px;top:306px" width="16" height="16" viewBox="0 0 16 16"><rect x="2" y="2" width="6.500" height="4.500" fill="#eee" stroke="#222" stroke-width="0.700"/><rect x="2" y="9.500" width="6.500" height="4.500" fill="#eee" stroke="#222" stroke-width="0.700"/><path d="M2 3.500h6.500M2 11h6.500" stroke="#e8b040" stroke-width="1"/><path d="M9 4h2.500q2.500 0 2.500 4t-2.500 4H9" fill="none" stroke="#222" stroke-width="2.400"/><path d="M9 4h2.500q2.500 0 2.500 4t-2.500 4H9" fill="none" stroke="#9cc0f8" stroke-width="1.200"/></svg>
<div class="menu" style="left:1268px;top:304px;width:73px;height:20px;"></div>
<span class="t w" style="left:1275px;top:309px;letter-spacing:-0.565px;">Data</span>
<svg style="left:1330.8px;top:307.5px" width="7" height="13" viewBox="0 0 7 13"><path d="M0.500 4.800L3.300 0L6.100 4.800z" fill="#c4c4c4"/><path d="M0.500 7.400L3.300 12.300L6.100 7.400z" fill="#c4c4c4" opacity="0.85"/></svg>
<div class="rad sel rl" style="left:1045px;top:329px;width:74px;height:20px;"></div>
<span class="t " style="left:981.5px;width:200px;text-align:center;top:334px;letter-spacing:-0.7px;">Surface</span>
<div class="rad" style="left:1118px;top:329px;width:75px;height:20px;"></div>
<span class="t w" style="left:1055.0px;width:200px;text-align:center;top:334px;letter-spacing:-0.558px;">Wire</span>
<div class="rad" style="left:1192px;top:329px;width:75px;height:20px;"></div>
<span class="t w" style="left:1129.0px;width:200px;text-align:center;top:334px;letter-spacing:-0.628px;">Volume</span>
<div class="rad rr" style="left:1266px;top:329px;width:75px;height:20px;"></div>
<span class="t w" style="left:1203.5px;width:200px;text-align:center;top:334px;letter-spacing:-0.45px;">Halo</span>
<div class="sep" style="left:1042px;top:357px;width:302px;height:1px;"></div>
<svg style="left:1050px;top:365px" width="10" height="10" viewBox="0 0 10 10"><path d="M0.300 0.500h8.700L4.650 9z" fill="#1a1a1a"/></svg>
<span class="t pt" style="left:1062px;top:363px;letter-spacing:-0.456px;">Preview</span>
<svg style="left:1328px;top:368px" width="12" height="6" viewBox="0 0 12 6"><rect x="0" y="0" width="1" height="1" fill="#929292"/><rect x="1" y="1" width="1" height="1" fill="#444"/><rect x="0" y="3" width="1" height="1" fill="#929292"/><rect x="1" y="4" width="1" height="1" fill="#444"/><rect x="3" y="0" width="1" height="1" fill="#929292"/><rect x="4" y="1" width="1" height="1" fill="#444"/><rect x="3" y="3" width="1" height="1" fill="#929292"/><rect x="4" y="4" width="1" height="1" fill="#444"/><rect x="6" y="0" width="1" height="1" fill="#929292"/><rect x="7" y="1" width="1" height="1" fill="#444"/><rect x="6" y="3" width="1" height="1" fill="#929292"/><rect x="7" y="4" width="1" height="1" fill="#444"/><rect x="9" y="0" width="1" height="1" fill="#929292"/><rect x="10" y="1" width="1" height="1" fill="#444"/><rect x="9" y="3" width="1" height="1" fill="#929292"/><rect x="10" y="4" width="1" height="1" fill="#444"/></svg>
<svg style="left:1045px;top:389px" width="258" height="112" viewBox="0 0 258 112"><defs><clipPath id="pvc"><rect x="0.5" y="0.5" width="257" height="111" rx="4"/></clipPath><radialGradient id="pvs" cx="0.40" cy="0.38" r="0.75" fx="0.40" fy="0.38"><stop offset="0" stop-color="#ecdcdc"/><stop offset="0.07" stop-color="#d0a8a4"/><stop offset="0.17" stop-color="#843830"/><stop offset="0.28" stop-color="#5a1f19"/><stop offset="0.7" stop-color="#48150f"/><stop offset="1" stop-color="#300c08"/></radialGradient><radialGradient id="pvsh" cx="0.5" cy="0.5" r="0.5"><stop offset="0" stop-color="#000" stop-opacity="0.95"/><stop offset="0.5" stop-color="#000" stop-opacity="0.6"/><stop offset="1" stop-color="#000" stop-opacity="0"/></radialGradient><linearGradient id="pvf" x1="0" y1="0" x2="0" y2="1"><stop offset="0" stop-color="#8a8a8a"/><stop offset="1" stop-color="#b4b4b4"/></linearGradient></defs><g clip-path="url(#pvc)"><rect width="258" height="112" fill="#2b2b2b"/><polygon points="-108.3,-72.4 -34.2,-45.4 -34.2,-11.9 -108.3,-29.9" fill="#8b8b8b"/><polygon points="-108.3,12.5 -34.2,21.5 -34.2,55.0 -108.3,55.0" fill="#8b8b8b"/><polygon points="-108.3,97.5 -34.2,88.5 -34.2,121.9 -108.3,139.9" fill="#8b8b8b"/><polygon points="-34.2,-78.8 14.0,-55.4 14.0,-27.8 -34.2,-45.4" fill="#8b8b8b"/><polygon points="-34.2,-11.9 14.0,-0.2 14.0,27.4 -34.2,21.5" fill="#8b8b8b"/><polygon points="-34.2,55.0 14.0,55.0 14.0,82.6 -34.2,88.5" fill="#8b8b8b"/><polygon points="14.0,-27.8 47.8,-15.5 47.8,8.0 14.0,-0.2" fill="#8b8b8b"/><polygon points="14.0,27.4 47.8,31.5 47.8,55.0 14.0,55.0" fill="#8b8b8b"/><polygon points="14.0,82.6 47.8,78.5 47.8,102.0 14.0,110.2" fill="#8b8b8b"/><polygon points="47.8,-38.9 72.9,-26.8 72.9,-6.3 47.8,-15.5" fill="#8b8b8b"/><polygon points="47.8,8.0 72.9,14.1 72.9,34.6 47.8,31.5" fill="#8b8b8b"/><polygon points="47.8,55.0 72.9,55.0 72.9,75.4 47.8,78.5" fill="#8b8b8b"/><polygon points="72.9,-6.3 92.2,0.7 92.2,18.8 72.9,14.1" fill="#8b8b8b"/><polygon points="72.9,34.6 92.2,36.9 92.2,55.0 72.9,55.0" fill="#8b8b8b"/><polygon points="72.9,75.4 92.2,73.1 92.2,91.2 72.9,95.9" fill="#8b8b8b"/><polygon points="92.2,-17.4 107.5,-9.9 107.5,6.3 92.2,0.7" fill="#8b8b8b"/><polygon points="92.2,18.8 107.5,22.5 107.5,38.8 92.2,36.9" fill="#8b8b8b"/><polygon points="92.2,55.0 107.5,55.0 107.5,71.2 92.2,73.1" fill="#8b8b8b"/><polygon points="107.5,6.3 120.0,10.9 120.0,25.6 107.5,22.5" fill="#8b8b8b"/><polygon points="107.5,38.8 120.0,40.3 120.0,55.0 107.5,55.0" fill="#8b8b8b"/><polygon points="107.5,71.2 120.0,69.7 120.0,84.4 107.5,87.5" fill="#8b8b8b"/><polygon points="120.0,-3.8 130.3,1.2 130.3,14.6 120.0,10.9" fill="#8b8b8b"/><polygon points="120.0,25.6 130.3,28.1 130.3,41.5 120.0,40.3" fill="#8b8b8b"/><polygon points="120.0,55.0 130.3,55.0 130.3,68.5 120.0,69.7" fill="#8b8b8b"/><polygon points="367.3,-72.4 293.2,-45.4 293.2,-11.9 367.3,-29.9" fill="#969696"/><polygon points="367.3,12.5 293.2,21.5 293.2,55.0 367.3,55.0" fill="#969696"/><polygon points="367.3,97.5 293.2,88.5 293.2,121.9 367.3,139.9" fill="#969696"/><polygon points="293.2,-78.8 245.0,-55.4 245.0,-27.8 293.2,-45.4" fill="#969696"/><polygon points="293.2,-11.9 245.0,-0.2 245.0,27.4 293.2,21.5" fill="#969696"/><polygon points="293.2,55.0 245.0,55.0 245.0,82.6 293.2,88.5" fill="#969696"/><polygon points="245.0,-27.8 211.2,-15.5 211.2,8.0 245.0,-0.2" fill="#969696"/><polygon points="245.0,27.4 211.2,31.5 211.2,55.0 245.0,55.0" fill="#969696"/><polygon points="245.0,82.6 211.2,78.5 211.2,102.0 245.0,110.2" fill="#969696"/><polygon points="211.2,-38.9 186.1,-26.8 186.1,-6.3 211.2,-15.5" fill="#969696"/><polygon points="211.2,8.0 186.1,14.1 186.1,34.6 211.2,31.5" fill="#969696"/><polygon points="211.2,55.0 186.1,55.0 186.1,75.4 211.2,78.5" fill="#969696"/><polygon points="186.1,-6.3 166.8,0.7 166.8,18.8 186.1,14.1" fill="#969696"/><polygon points="186.1,34.6 166.8,36.9 166.8,55.0 186.1,55.0" fill="#969696"/><polygon points="186.1,75.4 166.8,73.1 166.8,91.2 186.1,95.9" fill="#969696"/><polygon points="166.8,-17.4 151.5,-9.9 151.5,6.3 166.8,0.7" fill="#969696"/><polygon points="166.8,18.8 151.5,22.5 151.5,38.8 166.8,36.9" fill="#969696"/><polygon points="166.8,55.0 151.5,55.0 151.5,71.2 166.8,73.1" fill="#969696"/><polygon points="151.5,6.3 139.0,10.9 139.0,25.6 151.5,22.5" fill="#969696"/><polygon points="151.5,38.8 139.0,40.3 139.0,55.0 151.5,55.0" fill="#969696"/><polygon points="151.5,71.2 139.0,69.7 139.0,84.4 151.5,87.5" fill="#969696"/><polygon points="139.0,-3.8 128.7,1.2 128.7,14.6 139.0,10.9" fill="#969696"/><polygon points="139.0,25.6 128.7,28.1 128.7,41.5 139.0,40.3" fill="#969696"/><polygon points="139.0,55.0 128.7,55.0 128.7,68.5 139.0,69.7" fill="#969696"/><polygon points="-1125.6,449.2 -366.5,230.2 -229.0,167.6 -489.8,230.0" fill="#a2a2a2"/><polygon points="-848.8,450.1 -242.8,230.4 -149.5,167.6 -366.5,230.2" fill="#a2a2a2"/><polygon points="-570.5,450.7 -118.9,230.5 -69.9,167.7 -242.8,230.4" fill="#a2a2a2"/><polygon points="-149.5,167.6 -46.7,138.0 -33.2,120.7 -105.4,138.0" fill="#a2a2a2"/><polygon points="-290.9,451.2 5.3,230.6 9.8,167.7 -118.9,230.5" fill="#a2a2a2"/><polygon points="-69.9,167.7 12.0,138.0 13.2,120.7 -46.7,138.0" fill="#a2a2a2"/><polygon points="-10.7,451.4 129.5,230.6 89.6,167.8 5.3,230.6" fill="#a2a2a2"/><polygon points="9.8,167.7 70.7,138.0 59.7,120.7 12.0,138.0" fill="#a2a2a2"/><polygon points="13.2,120.7 52.5,109.4 47.4,101.4 14.1,109.4" fill="#a2a2a2"/><polygon points="269.7,451.4 253.7,230.6 169.4,167.8 129.5,230.6" fill="#a2a2a2"/><polygon points="89.6,167.8 129.5,138.0 106.2,120.7 70.7,138.0" fill="#a2a2a2"/><polygon points="59.7,120.7 91.0,109.4 80.3,101.4 52.5,109.4" fill="#a2a2a2"/><polygon points="549.9,451.2 377.9,230.5 249.2,167.7 253.7,230.6" fill="#a2a2a2"/><polygon points="169.4,167.8 188.3,138.0 152.8,120.7 129.5,138.0" fill="#a2a2a2"/><polygon points="106.2,120.7 129.5,109.4 113.1,101.4 91.0,109.4" fill="#a2a2a2"/><polygon points="80.3,101.4 100.9,95.4 91.5,90.8 72.3,95.4" fill="#a2a2a2"/><polygon points="829.5,450.7 501.8,230.4 328.9,167.7 377.9,230.5" fill="#a2a2a2"/><polygon points="249.2,167.7 247.0,138.0 199.3,120.7 188.3,138.0" fill="#a2a2a2"/><polygon points="152.8,120.7 168.0,109.4 145.9,101.4 129.5,109.4" fill="#a2a2a2"/><polygon points="113.1,101.4 129.5,95.4 116.8,90.8 100.9,95.4" fill="#a2a2a2"/><polygon points="1107.8,450.1 625.5,230.2 408.5,167.6 501.8,230.4" fill="#a2a2a2"/><polygon points="328.9,167.7 305.7,138.0 245.8,120.7 247.0,138.0" fill="#a2a2a2"/><polygon points="199.3,120.7 206.5,109.4 178.7,101.4 168.0,109.4" fill="#a2a2a2"/><polygon points="145.9,101.4 158.1,95.4 142.2,90.8 129.5,95.4" fill="#a2a2a2"/><polygon points="116.8,90.8 129.5,87.2 119.2,84.2 106.7,87.2" fill="#a2a2a2"/><polygon points="1384.6,449.2 748.8,230.0 488.0,167.6 625.5,230.2" fill="#a2a2a2"/><polygon points="408.5,167.6 364.4,138.0 292.2,120.7 305.7,138.0" fill="#a2a2a2"/><polygon points="245.8,120.7 244.9,109.4 211.6,101.4 206.5,109.4" fill="#a2a2a2"/><polygon points="178.7,101.4 186.7,95.4 167.5,90.8 158.1,95.4" fill="#a2a2a2"/><polygon points="142.2,90.8 152.3,87.2 139.8,84.2 129.5,87.2" fill="#a2a2a2"/><ellipse cx="131" cy="102" rx="34" ry="9" fill="url(#pvsh)"/><path d="M120.500 93L153 93.500L145 100L131 102L123.500 97z" fill="#4a1510"/><path d="M78.500 54C78.500 25 100 5 129 5C158 5 178.700 26 178.700 54C178.700 70 172 82 164 88C152 95 134 95 121 91.500C99 86 78.500 74 78.500 54Z" fill="url(#pvs)"/><path d="M84 73C95 84 110 90 122 92.500C136 96 152 94.500 163 88.500" fill="none" stroke="#8a7a78" stroke-width="0.8" opacity="0.7"/></g><rect x="0.5" y="0.5" width="257" height="111" rx="4" fill="none" stroke="#3a3a3a"/></svg>
<div class="rad rt" style="left:1311px;top:389px;width:30px;height:21px;"></div>
<svg style="left:1318px;top:391px" width="16" height="16" viewBox="0 0 16 16"><rect x="2.500" y="2.500" width="11" height="11" fill="#b0b0b0" stroke="#3a3a3a" stroke-width="0.800"/></svg>
<div class="rad sel" style="left:1311px;top:409px;width:30px;height:21px;"></div>
<svg style="left:1318px;top:411px" width="16" height="16" viewBox="0 0 16 16"><circle cx="8" cy="8" r="6.500" fill="url(#gs)" stroke="#222" stroke-width="0.700"/></svg>
<div class="rad" style="left:1311px;top:429px;width:30px;height:21px;"></div>
<svg style="left:1318px;top:431px" width="16" height="16" viewBox="0 0 16 16"><path d="M2 4.500L8 2l6 2.500v7L8 14.500L2 11.500z" fill="#a8a8a8" stroke="#333" stroke-width="0.700"/><path d="M8 7l6-2.500v7L8 14.500z" fill="#6e6e6e"/><path d="M2 4.500L8 2l6 2.500L8 7z" fill="#d4d4d4"/></svg>
<div class="rad" style="left:1311px;top:449px;width:30px;height:21px;"></div>
<svg style="left:1318px;top:451px" width="16" height="16" viewBox="0 0 16 16"><path d="M8 2.500c2.500 0 3.800 1.500 3.800 3.500c1.500-.800 2.800-.300 2.800 1.200s-1.500 2-2.800 1.500c-.300 1.500-1.300 2-1.800 3v2.300h-4V11.700c-.500-1-1.500-1.500-1.800-3c-1.300.500-2.800 0-2.800-1.500s1.300-2 2.800-1.200c0-2 1.300-3.500 3.800-3.500z" fill="#bcbcbc" stroke="#333" stroke-width="0.700"/><circle cx="6" cy="6.800" r="1" fill="#333"/><circle cx="10" cy="6.800" r="1" fill="#333"/></svg>
<div class="rad" style="left:1311px;top:469px;width:30px;height:21px;"></div>
<svg style="left:1318px;top:471px" width="16" height="16" viewBox="0 0 16 16"><path d="M3 14C3 8 5 4 7.500 2M7.500 14c0-5 1.500-8 4-10M11.500 14c0-3 1-5 3-6.500" fill="none" stroke="#2a2a2a" stroke-width="2.400" stroke-linecap="round"/><path d="M3 14C3 8 5 4 7.500 2M7.500 14c0-5 1.500-8 4-10M11.500 14c0-3 1-5 3-6.500" fill="none" stroke="#c4c4c4" stroke-width="1.200" stroke-linecap="round"/></svg>
<div class="rad rb" style="left:1311px;top:489px;width:30px;height:20px;"></div>
<svg style="left:1318px;top:491px" width="16" height="16" viewBox="0 0 16 16"><circle cx="3.500" cy="3.500" r="2" fill="#f0e060"/><path d="M8 5a2.200 2.200 0 0 1 4-1a2 2 0 0 1 2.500 2.500H8.500z" fill="#8cb4e8"/><circle cx="7" cy="10.500" r="4.500" fill="url(#gs)" stroke="#333" stroke-width="0.500"/></svg>
<svg style="left:1167px;top:502px" width="14" height="7" viewBox="0 0 14 7"><path d="M0 1.500h14M0 4.500h14" stroke="#1a1a1a" stroke-width="1"/><path d="M0 2.500h14M0 5.500h14" stroke="#a8a8a8" stroke-width="1"/></svg>
<div class="sep" style="left:1042px;top:516px;width:302px;height:1px;"></div>
<svg style="left:1050px;top:524px" width="10" height="10" viewBox="0 0 10 10"><path d="M0.300 0.500h8.700L4.650 9z" fill="#1a1a1a"/></svg>
<span class="t pt" style="left:1062px;top:522px;letter-spacing:-0.323px;">Diffuse</span>
<svg style="left:1328px;top:527px" width="12" height="6" viewBox="0 0 12 6"><rect x="0" y="0" width="1" height="1" fill="#929292"/><rect x="1" y="1" width="1" height="1" fill="#444"/><rect x="0" y="3" width="1" height="1" fill="#929292"/><rect x="1" y="4" width="1" height="1" fill="#444"/><rect x="3" y="0" width="1" height="1" fill="#929292"/><rect x="4" y="1" width="1" height="1" fill="#444"/><rect x="3" y="3" width="1" height="1" fill="#929292"/><rect x="4" y="4" width="1" height="1" fill="#444"/><rect x="6" y="0" width="1" height="1" fill="#929292"/><rect x="7" y="1" width="1" height="1" fill="#444"/><rect x="6" y="3" width="1" height="1" fill="#929292"/><rect x="7" y="4" width="1" height="1" fill="#444"/><rect x="9" y="0" width="1" height="1" fill="#929292"/><rect x="10" y="1" width="1" height="1" fill="#444"/><rect x="9" y="3" width="1" height="1" fill="#929292"/><rect x="10" y="4" width="1" height="1" fill="#444"/></svg>
<div style="left:1045px;top:549px;width:144px;height:20px;background:#fff;border:1px solid #2c2c2c;border-radius:4px"></div>
<div class="menu" style="left:1197px;top:549px;width:144px;height:20px;"></div>
<span class="t w" style="left:1204px;top:554px;letter-spacing:-0.596px;">Lambert</span>
<svg style="left:1330.8px;top:552.5px" width="7" height="13" viewBox="0 0 7 13"><path d="M0.500 4.800L3.300 0L6.100 4.800z" fill="#c4c4c4"/><path d="M0.500 7.400L3.300 12.300L6.100 7.400z" fill="#c4c4c4" opacity="0.85"/></svg>
<div class="num" style="left:1045px;top:571px;width:144px;height:20px;overflow:hidden"><div style="left:-1px;top:-1px;width:116px;height:20px;background:linear-gradient(#6c6c6c,#808080)"></div></div>
<span class="t " style="left:1059px;top:576px;letter-spacing:-0.558px;">Intensity:</span>
<span class="t " style="right:192px;top:576px;letter-spacing:-0.1px;">0.800</span>
<div class="chk" style="left:1200px;top:574px;width:14px;height:14px;"></div>
<span class="t " style="left:1221px;top:576px;letter-spacing:-0.77px;">Ramp</span>
<div class="sep" style="left:1042px;top:604px;width:302px;height:1px;"></div>
<svg style="left:1050px;top:612px" width="10" height="10" viewBox="0 0 10 10"><path d="M0.300 0.500h8.700L4.650 9z" fill="#1a1a1a"/></svg>
<span class="t pt" style="left:1062px;top:610px;letter-spacing:-0.555px;">Specular</span>
<svg style="left:1328px;top:615px" width="12" height="6" viewBox="0 0 12 6"><rect x="0" y="0" width="1" height="1" fill="#929292"/><rect x="1" y="1" width="1" height="1" fill="#444"/><rect x="0" y="3" width="1" height="1" fill="#929292"/><rect x="1" y="4" width="1" height="1" fill="#444"/><rect x="3" y="0" width="1" height="1" fill="#929292"/><rect x="4" y="1" width="1" height="1" fill="#444"/><rect x="3" y="3" width="1" height="1" fill="#929292"/><rect x="4" y="4" width="1" height="1" fill="#444"/><rect x="6" y="0" width="1" height="1" fill="#929292"/><rect x="7" y="1" width="1" height="1" fill="#444"/><rect x="6" y="3" width="1" height="1" fill="#929292"/><rect x="7" y="4" width="1" height="1" fill="#444"/><rect x="9" y="0" width="1" height="1" fill="#929292"/><rect x="10" y="1" width="1" height="1" fill="#444"/><rect x="9" y="3" width="1" height="1" fill="#929292"/><rect x="10" y="4" width="1" height="1" fill="#444"/></svg>
<div style="left:1045px;top:636px;width:144px;height:20px;background:#fff;border:1px solid #2c2c2c;border-radius:4px"></div>
<div class="menu" style="left:1197px;top:636px;width:144px;height:20px;"></div>
<span class="t w" style="left:1204px;top:641px;letter-spacing:-0.625px;">CookTorr</span>
<svg style="left:1330.8px;top:639.5px" width="7" height="13" viewBox="0 0 7 13"><path d="M0.500 4.800L3.300 0L6.100 4.800z" fill="#c4c4c4"/><path d="M0.500 7.400L3.300 12.300L6.100 7.400z" fill="#c4c4c4" opacity="0.85"/></svg>
<div class="num" style="left:1045px;top:658px;width:144px;height:20px;overflow:hidden"><div style="left:-1px;top:-1px;width:76px;height:20px;background:linear-gradient(#6c6c6c,#808080)"></div></div>
<span class="t " style="left:1059px;top:663px;letter-spacing:-0.558px;">Intensity:</span>
<span class="t " style="right:192px;top:663px;letter-spacing:-0.1px;">0.500</span>
<div class="chk" style="left:1200px;top:661px;width:14px;height:14px;"></div>
<span class="t " style="left:1221px;top:663px;letter-spacing:-0.77px;">Ramp</span>
<div class="num" style="left:1045px;top:683px;width:296px;height:20px;"></div>
<svg style="left:1051px;top:689px" width="5" height="8" viewBox="0 0 5 8"><path d="M4.500 0.500v7L0.500 4z" fill="#6e6e6e"/></svg>
<svg style="left:1330px;top:689px" width="5" height="8" viewBox="0 0 5 8"><path d="M0.500 0.500v7L4.500 4z" fill="#6e6e6e"/></svg>
<span class="t " style="left:1060px;top:688px;letter-spacing:-0.713px;">Hardness:</span>
<span class="t " style="right:41px;top:688px;letter-spacing:0.0px;">49</span>
<div class="sep" style="left:1042px;top:711px;width:302px;height:1px;"></div>
<svg style="left:1050px;top:719px" width="10" height="10" viewBox="0 0 10 10"><path d="M0.300 0.500h8.700L4.650 9z" fill="#1a1a1a"/></svg>
<span class="t pt" style="left:1062px;top:717px;letter-spacing:-0.535px;">Shading</span>
<svg style="left:1328px;top:722px" width="12" height="6" viewBox="0 0 12 6"><rect x="0" y="0" width="1" height="1" fill="#929292"/><rect x="1" y="1" width="1" height="1" fill="#444"/><rect x="0" y="3" width="1" height="1" fill="#929292"/><rect x="1" y="4" width="1" height="1" fill="#444"/><rect x="3" y="0" width="1" height="1" fill="#929292"/><rect x="4" y="1" width="1" height="1" fill="#444"/><rect x="3" y="3" width="1" height="1" fill="#929292"/><rect x="4" y="4" width="1" height="1" fill="#444"/><rect x="6" y="0" width="1" height="1" fill="#929292"/><rect x="7" y="1" width="1" height="1" fill="#444"/><rect x="6" y="3" width="1" height="1" fill="#929292"/><rect x="7" y="4" width="1" height="1" fill="#444"/><rect x="9" y="0" width="1" height="1" fill="#929292"/><rect x="10" y="1" width="1" height="1" fill="#444"/><rect x="9" y="3" width="1" height="1" fill="#929292"/><rect x="10" y="4" width="1" height="1" fill="#444"/></svg>
<div class="num" style="left:1045px;top:743px;width:144px;height:20px;"></div>
<svg style="left:1051px;top:749px" width="5" height="8" viewBox="0 0 5 8"><path d="M4.500 0.500v7L0.500 4z" fill="#6e6e6e"/></svg>
<svg style="left:1178px;top:749px" width="5" height="8" viewBox="0 0 5 8"><path d="M0.500 0.500v7L4.500 4z" fill="#6e6e6e"/></svg>
<span class="t " style="left:1060px;top:748px;letter-spacing:-0.55px;">Emit:</span>
<span class="t " style="right:193px;top:748px;letter-spacing:-0.125px;">0.00</span>
<div class="chk" style="left:1200px;top:746px;width:14px;height:14px;"></div>
<span class="t " style="left:1221px;top:748px;letter-spacing:-0.748px;">Shadeless</span>
<div class="num" style="left:1045px;top:764px;width:144px;height:10px;"></div>
<div style="left:1037px;top:766px;width:329px;height:2px;background:#0c0c0c"></div>
<svg style="left:1037px;top:754px" width="12" height="12" viewBox="0 0 12 12"><path d="M0 0L12 12" stroke="#000" stroke-opacity="0.8" stroke-width="1"/><path d="M0 1.4L10.6 12" stroke="#fff" stroke-opacity="0.75" stroke-width="1"/><path d="M0 3L9 12" stroke="#000" stroke-opacity="0.8" stroke-width="1"/><path d="M0 4.4L7.6 12" stroke="#fff" stroke-opacity="0.6" stroke-width="1"/><path d="M0 6L6 12" stroke="#000" stroke-opacity="0.8" stroke-width="1"/><path d="M0 7.4L4.6 12" stroke="#fff" stroke-opacity="0.45" stroke-width="1"/><path d="M0 9L3 12" stroke="#000" stroke-opacity="0.8" stroke-width="1"/><path d="M0 10.4L1.6 12" stroke="#fff" stroke-opacity="0.3" stroke-width="1"/></svg>
</body></html>
